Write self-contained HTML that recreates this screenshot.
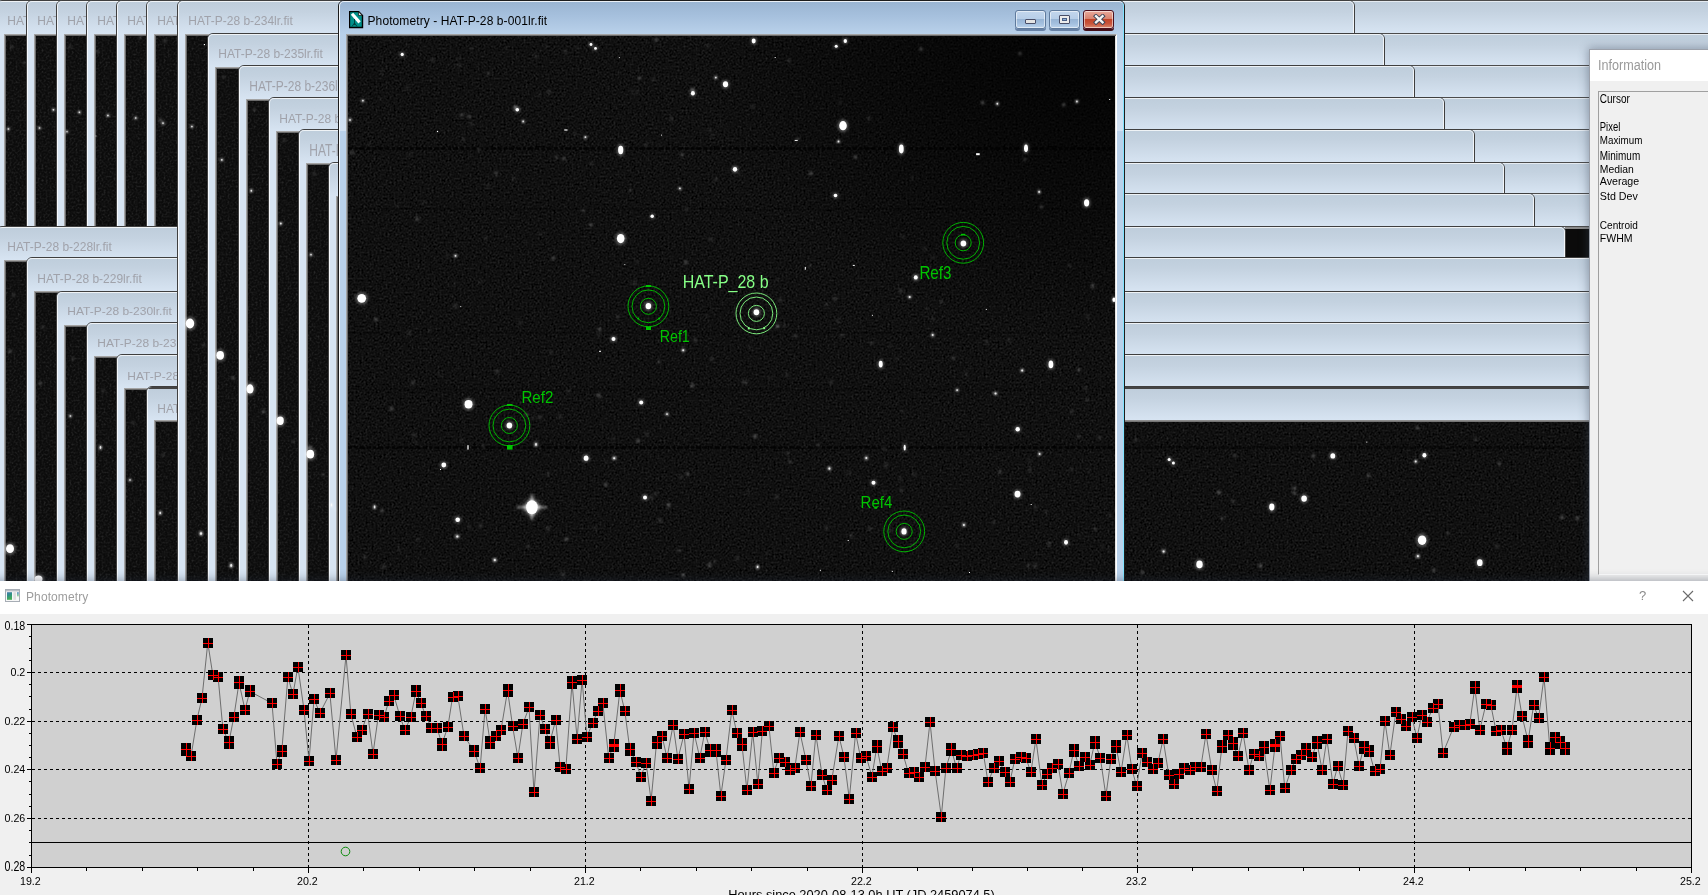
<!DOCTYPE html><html><head><meta charset="utf-8"><title>Photometry</title><style>
*{box-sizing:border-box;margin:0;padding:0}
html,body{width:1708px;height:895px;overflow:hidden;background:#f0f0f0;font-family:"Liberation Sans", sans-serif}
#top{position:absolute;left:0;top:0;width:1708px;height:581px;overflow:hidden;background:#d7e4f2}
.abs{position:absolute}
.win{position:absolute;border:1px solid #3f3f3f;border-radius:6px 6px 0 0;background:#d7e4f2;overflow:hidden}
.win .hl{position:absolute;left:0;top:0;right:0;bottom:0;border:1px solid rgba(255,255,255,.75);border-radius:5px 5px 0 0;border-bottom:none}
.win .tb{position:absolute;left:0;top:0;right:0;height:33px;background:linear-gradient(#becddb 0%,#c4d2e0 32%,#d7e4f2 100%)}
.win .tt{position:absolute;left:10.3px;top:14px;font-size:12px;line-height:14px;color:#a0a2aa;white-space:pre}
.win .cl{position:absolute;left:7px;top:33px;right:7px;bottom:-4px;border:1px solid;border-color:#a3a3a3 #fff #fff #a3a3a3;box-shadow:inset 1px 1px 0 #6b6b6b,inset -1px -1px 0 #e3e3e3;background:#0b0b0b}
.win.act{background:#b9d1ea;border-color:#1c1c1c}
.win.act .tb{background:linear-gradient(#99b4d1 0%,#a6c0dd 45%,#b9d1ea 100%)}
.win.act .tt{color:#000}
.row{position:absolute;left:1124px;right:0;border-top:1px solid #4c4c4c;background:linear-gradient(#becddb 0%,#c4d2e0 32%,#d7e4f2 100%)}
.row:after{content:"";position:absolute;left:0;right:0;top:0;height:1px;background:rgba(255,255,255,.6)}
.lbl{position:absolute;white-space:pre;transform-origin:0 0}
</style></head><body>
<svg width="0" height="0" style="position:absolute"><defs>
<filter id="noise" x="0" y="0" width="100%" height="100%" color-interpolation-filters="sRGB">
<feTurbulence type="fractalNoise" baseFrequency="0.5" numOctaves="2" seed="7" result="t"/>
<feColorMatrix in="t" type="matrix" values="0.13 0.13 0.13 0 -0.132  0.13 0.13 0.13 0 -0.132  0.13 0.13 0.13 0 -0.132  0 0 0 0 1"/>
</filter>
<filter id="sb" x="-20%" y="-20%" width="140%" height="140%"><feGaussianBlur stdDeviation="0.6"/></filter>
<filter id="sb2" x="-20%" y="-20%" width="140%" height="140%"><feGaussianBlur stdDeviation="0.95"/></filter>
</defs></svg>
<div id="top">
<div class="row" style="top:0px;height:33px"></div>
<div class="row" style="top:33px;height:32px"></div>
<div class="row" style="top:65px;height:32px"></div>
<div class="row" style="top:97px;height:32px"></div>
<div class="row" style="top:129px;height:33px"></div>
<div class="row" style="top:162px;height:31px"></div>
<div class="row" style="top:193px;height:33px"></div>
<div class="row" style="top:226px;height:31px"></div>
<div class="row" style="top:257px;height:34px"></div>
<div class="row" style="top:291px;height:31px"></div>
<div class="row" style="top:322px;height:32px"></div>
<div class="row" style="top:354px;height:32px"></div>
<div class="row" style="top:386px;height:36px"></div>
<div class="abs" style="left:1565px;top:227px;width:30px;height:30px;background:#0b0b0b;border-top:2px solid #8a8a8a"></div>
<div class="win " style="left:-4px;top:0px;width:1178px;height:700px"><div class="tb"></div><div class="hl"></div><div class="tt" style="top:12.64px;transform:scaleY(1.12);transform-origin:0 11.16px">HAT-P-28 b-222lr.fit</div><div class="cl"></div></div>
<div class="win " style="left:26px;top:0px;width:1178px;height:700px"><div class="tb"></div><div class="hl"></div><div class="tt" style="top:12.64px;transform:scaleY(1.12);transform-origin:0 11.16px">HAT-P-28 b-223lr.fit</div><div class="cl"></div></div>
<div class="win " style="left:56px;top:0px;width:1178px;height:700px"><div class="tb"></div><div class="hl"></div><div class="tt" style="top:12.64px;transform:scaleY(1.12);transform-origin:0 11.16px">HAT-P-28 b-224lr.fit</div><div class="cl"></div></div>
<div class="win " style="left:86px;top:0px;width:1178px;height:700px"><div class="tb"></div><div class="hl"></div><div class="tt" style="top:12.64px;transform:scaleY(1.12);transform-origin:0 11.16px">HAT-P-28 b-225lr.fit</div><div class="cl"></div></div>
<div class="win " style="left:116px;top:0px;width:1178px;height:700px"><div class="tb"></div><div class="hl"></div><div class="tt" style="top:12.64px;transform:scaleY(1.12);transform-origin:0 11.16px">HAT-P-28 b-226lr.fit</div><div class="cl"></div></div>
<div class="win " style="left:146px;top:0px;width:1178px;height:700px"><div class="tb"></div><div class="hl"></div><div class="tt" style="top:12.64px;transform:scaleY(1.12);transform-origin:0 11.16px">HAT-P-28 b-227lr.fit</div><div class="cl"></div></div>
<div class="win " style="left:-4px;top:226px;width:1178px;height:700px"><div class="tb"></div><div class="hl"></div><div class="tt" style="top:12.64px;transform:scaleY(1.0);transform-origin:0 11.16px">HAT-P-28 b-228lr.fit</div><div class="cl"></div></div>
<div class="win " style="left:26px;top:257px;width:1178px;height:700px"><div class="tb"></div><div class="hl"></div><div class="tt" style="top:14.44px;transform:scaleY(1.06);transform-origin:0 11.16px">HAT-P-28 b-229lr.fit</div><div class="cl"></div></div>
<div class="win " style="left:56px;top:291px;width:1178px;height:700px"><div class="tb"></div><div class="hl"></div><div class="tt" style="top:11.59px;transform:scaleY(0.98);transform-origin:0 11.16px">HAT-P-28 b-230lr.fit</div><div class="cl"></div></div>
<div class="win " style="left:86px;top:322px;width:1178px;height:700px"><div class="tb"></div><div class="hl"></div><div class="tt" style="top:13.44px;transform:scaleY(0.97);transform-origin:0 11.16px">HAT-P-28 b-231lr.fit</div><div class="cl"></div></div>
<div class="win " style="left:116px;top:354px;width:1178px;height:700px"><div class="tb"></div><div class="hl"></div><div class="tt" style="top:13.64px;transform:scaleY(0.98);transform-origin:0 11.16px">HAT-P-28 b-232lr.fit</div><div class="cl"></div></div>
<div class="win " style="left:146px;top:386px;width:1178px;height:700px"><div class="tb"></div><div class="hl"></div><div style="position:absolute;left:0;right:0;top:0;height:2px;background:#444"></div><div class="tt" style="top:14.64px;transform:scaleY(1.12);transform-origin:0 11.16px">HAT-P-28 b-233lr.fit</div><div class="cl"></div></div>
<div class="win " style="left:177px;top:0px;width:1178px;height:700px"><div class="tb"></div><div class="hl"></div><div class="tt" style="top:12.64px;transform:scaleY(1.12);transform-origin:0 11.16px">HAT-P-28 b-234lr.fit</div><div class="cl"></div></div>
<div class="win " style="left:207px;top:33px;width:1178px;height:700px"><div class="tb"></div><div class="hl"></div><div class="tt" style="top:12.84px;transform:scaleY(1.0);transform-origin:0 11.16px">HAT-P-28 b-235lr.fit</div><div class="cl"></div></div>
<div class="win " style="left:238px;top:65px;width:1177px;height:700px"><div class="tb"></div><div class="hl"></div><div class="tt" style="top:13.54px;transform:scaleY(1.19);transform-origin:0 11.16px">HAT-P-28 b-236lr.fit</div><div class="cl"></div></div>
<div class="win " style="left:268px;top:97px;width:1177px;height:700px"><div class="tb"></div><div class="hl"></div><div class="tt" style="top:13.54px;transform:scaleY(1.05);transform-origin:0 11.16px">HAT-P-28 b-237lr.fit</div><div class="cl"></div></div>
<div class="win " style="left:298px;top:129px;width:1177px;height:700px"><div class="tb"></div><div class="hl"></div><div class="tt" style="top:14.74px;transform:scaleY(1.33);transform-origin:0 11.16px">HAT-P-28 b-238lr.fit</div><div class="cl"></div></div>
<div class="win " style="left:328px;top:162px;width:1177px;height:700px"><div class="tb"></div><div class="hl"></div><div class="tt" style="top:12.84px;transform:scaleY(1.0);transform-origin:0 11.16px">HAT-P-28 b-239lr.fit</div><div class="cl"></div></div>
<div class="win " style="left:358px;top:193px;width:1177px;height:700px"><div class="tb"></div><div class="hl"></div><div class="tt" style="top:12.84px;transform:scaleY(1.0);transform-origin:0 11.16px">HAT-P-28 b-240lr.fit</div><div class="cl"></div></div>
<div class="win " style="left:388px;top:226px;width:1178px;height:700px"><div class="tb"></div><div class="hl"></div><div class="tt" style="top:12.84px;transform:scaleY(1.0);transform-origin:0 11.16px">HAT-P-28 b-241lr.fit</div><div class="cl"></div></div>
<div class="win " style="left:418px;top:257px;width:1177px;height:700px"><div class="tb"></div><div class="hl"></div><div class="tt" style="top:12.84px;transform:scaleY(1.0);transform-origin:0 11.16px">HAT-P-28 b-242lr.fit</div><div class="cl"></div></div>
<div class="win " style="left:448px;top:291px;width:1177px;height:700px"><div class="tb"></div><div class="hl"></div><div class="tt" style="top:12.84px;transform:scaleY(1.0);transform-origin:0 11.16px">HAT-P-28 b-243lr.fit</div><div class="cl"></div></div>
<div class="win " style="left:478px;top:322px;width:1177px;height:700px"><div class="tb"></div><div class="hl"></div><div class="tt" style="top:12.84px;transform:scaleY(1.0);transform-origin:0 11.16px">HAT-P-28 b-244lr.fit</div><div class="cl"></div></div>
<div class="win " style="left:508px;top:354px;width:1177px;height:700px"><div class="tb"></div><div class="hl"></div><div class="tt" style="top:12.84px;transform:scaleY(1.0);transform-origin:0 11.16px">HAT-P-28 b-245lr.fit</div><div class="cl"></div></div>
<div class="win " style="left:538px;top:386px;width:1177px;height:700px"><div class="tb"></div><div class="hl"></div><div style="position:absolute;left:0;right:0;top:0;height:2px;background:#444"></div><div class="tt" style="top:12.84px;transform:scaleY(1.0);transform-origin:0 11.16px">HAT-P-28 b-246lr.fit</div><div class="cl"></div></div>
<svg class="abs" style="left:0;top:34px;mix-blend-mode:lighten" width="338" height="547" viewBox="0 0 338 547"><rect x="0" y="0" width="338" height="547" filter="url(#noise)"/></svg><svg class="abs" style="left:0;top:0" width="338" height="581" viewBox="0 0 338 581"><g filter="url(#sb2)"><ellipse cx="8.4" cy="129.0" rx="1.5" ry="1.5" fill="#fff" fill-opacity="0.7"/><ellipse cx="39.5" cy="128.0" rx="1.5" ry="1.5" fill="#fff" fill-opacity="0.7"/><ellipse cx="67.0" cy="131.7" rx="1.2" ry="1.5" fill="#fff" fill-opacity="0.7"/><ellipse cx="79.4" cy="112.3" rx="1.5" ry="1.5" fill="#fff" fill-opacity="0.7"/><ellipse cx="107.9" cy="115.6" rx="1.5" ry="1.5" fill="#fff" fill-opacity="0.7"/><ellipse cx="135.7" cy="118.0" rx="1.5" ry="1.5" fill="#fff" fill-opacity="0.7"/><ellipse cx="163.0" cy="123.2" rx="1.5" ry="1.5" fill="#fff" fill-opacity="0.7"/><ellipse cx="160.5" cy="120.0" rx="2.0" ry="2.0" fill="#fff" fill-opacity="0.2"/><ellipse cx="12.0" cy="47.0" rx="1.5" ry="1.5" fill="#fff" fill-opacity="0.2"/><ellipse cx="24.0" cy="63.0" rx="1.2" ry="1.5" fill="#fff" fill-opacity="0.2"/><ellipse cx="70.0" cy="47.0" rx="1.4" ry="1.4" fill="#fff" fill-opacity="0.2"/><ellipse cx="98.0" cy="52.0" rx="1.4" ry="1.4" fill="#fff" fill-opacity="0.2"/><ellipse cx="140.0" cy="38.0" rx="1.4" ry="1.4" fill="#fff" fill-opacity="0.2"/><ellipse cx="165.0" cy="41.0" rx="1.4" ry="1.4" fill="#fff" fill-opacity="0.2"/><ellipse cx="53.4" cy="109.8" rx="1.5" ry="1.5" fill="#fff" fill-opacity="0.7"/><ellipse cx="191.9" cy="126.6" rx="1.5" ry="1.5" fill="#fff" fill-opacity="0.7"/><ellipse cx="221.8" cy="159.8" rx="1.6" ry="1.6" fill="#fff" fill-opacity="0.7"/><ellipse cx="251.3" cy="190.8" rx="1.5" ry="1.8" fill="#fff" fill-opacity="0.7"/><ellipse cx="280.8" cy="223.5" rx="1.6" ry="1.6" fill="#fff" fill-opacity="0.7"/><ellipse cx="311.0" cy="254.7" rx="1.5" ry="1.5" fill="#fff" fill-opacity="0.7"/><ellipse cx="254.3" cy="109.7" rx="1.5" ry="1.5" fill="#fff" fill-opacity="0.2"/><ellipse cx="284.1" cy="140.7" rx="1.5" ry="1.5" fill="#fff" fill-opacity="0.2"/><ellipse cx="314.4" cy="173.9" rx="1.5" ry="1.5" fill="#fff" fill-opacity="0.2"/><ellipse cx="224.0" cy="77.0" rx="1.5" ry="1.5" fill="#fff" fill-opacity="0.2"/><ellipse cx="190.0" cy="323.5" rx="6.27" ry="7.35" fill="#fff" fill-opacity="0.26"/><ellipse cx="220.2" cy="355.3" rx="5.73" ry="6.54" fill="#fff" fill-opacity="0.26"/><ellipse cx="250.0" cy="388.9" rx="5.46" ry="6.81" fill="#fff" fill-opacity="0.26"/><ellipse cx="280.2" cy="420.7" rx="5.46" ry="6.27" fill="#fff" fill-opacity="0.26"/><ellipse cx="310.3" cy="454.2" rx="5.73" ry="6.54" fill="#fff" fill-opacity="0.26"/><ellipse cx="309.5" cy="447.0" rx="2.5" ry="1.5" fill="#fff" fill-opacity="0.32"/><ellipse cx="203.5" cy="345.5" rx="1.4" ry="1.4" fill="#fff" fill-opacity="0.2"/><ellipse cx="233.0" cy="378.0" rx="1.6" ry="1.6" fill="#fff" fill-opacity="0.32"/><ellipse cx="263.5" cy="411.5" rx="1.6" ry="1.6" fill="#fff" fill-opacity="0.32"/><ellipse cx="293.0" cy="441.5" rx="1.4" ry="1.4" fill="#fff" fill-opacity="0.2"/><ellipse cx="323.0" cy="474.5" rx="1.4" ry="1.4" fill="#fff" fill-opacity="0.2"/><ellipse cx="201.0" cy="533.6" rx="2.0" ry="2.4" fill="#fff" fill-opacity="0.7"/><ellipse cx="231.2" cy="565.5" rx="1.8" ry="2.6" fill="#fff" fill-opacity="0.7"/><ellipse cx="331.5" cy="505.0" rx="1.2" ry="2.6" fill="#fff" fill-opacity="0.7"/><ellipse cx="335.0" cy="509.0" rx="1.2" ry="1.6" fill="#fff" fill-opacity="0.2"/><ellipse cx="10.0" cy="351.3" rx="1.5" ry="1.5" fill="#fff" fill-opacity="0.32"/><ellipse cx="40.2" cy="383.2" rx="1.5" ry="1.5" fill="#fff" fill-opacity="0.32"/><ellipse cx="70.4" cy="416.0" rx="1.5" ry="1.5" fill="#fff" fill-opacity="0.7"/><ellipse cx="100.5" cy="447.5" rx="1.4" ry="2.6" fill="#fff" fill-opacity="0.7"/><ellipse cx="130.0" cy="480.0" rx="1.5" ry="1.5" fill="#fff" fill-opacity="0.7"/><ellipse cx="160.2" cy="512.9" rx="1.5" ry="2.2" fill="#fff" fill-opacity="0.7"/><ellipse cx="10.0" cy="548.7" rx="6.0" ry="6.54" fill="#fff" fill-opacity="0.26"/><ellipse cx="38.5" cy="579.0" rx="6.0" ry="5.46" fill="#fff" fill-opacity="0.26"/><ellipse cx="24.0" cy="571.0" rx="1.4" ry="1.4" fill="#fff" fill-opacity="0.2"/><ellipse cx="13.5" cy="295.0" rx="1.4" ry="1.4" fill="#fff" fill-opacity="0.2"/><ellipse cx="43.0" cy="327.0" rx="1.4" ry="1.4" fill="#fff" fill-opacity="0.2"/><ellipse cx="73.0" cy="359.0" rx="1.4" ry="1.4" fill="#fff" fill-opacity="0.2"/><ellipse cx="103.0" cy="391.0" rx="1.4" ry="1.4" fill="#fff" fill-opacity="0.2"/><ellipse cx="133.0" cy="423.0" rx="1.4" ry="1.4" fill="#fff" fill-opacity="0.2"/><ellipse cx="163.0" cy="455.0" rx="1.4" ry="1.4" fill="#fff" fill-opacity="0.2"/><ellipse cx="10.0" cy="520.0" rx="1.4" ry="1.4" fill="#fff" fill-opacity="0.2"/></g><g filter="url(#sb)"><ellipse cx="8.4" cy="129.0" rx="0.83" ry="0.83" fill="#fff" fill-opacity="0.8"/><ellipse cx="39.5" cy="128.0" rx="0.83" ry="0.83" fill="#fff" fill-opacity="0.8"/><ellipse cx="67.0" cy="131.7" rx="0.66" ry="0.83" fill="#fff" fill-opacity="0.8"/><ellipse cx="79.4" cy="112.3" rx="0.83" ry="0.83" fill="#fff" fill-opacity="0.8"/><ellipse cx="107.9" cy="115.6" rx="0.83" ry="0.83" fill="#fff" fill-opacity="0.8"/><ellipse cx="135.7" cy="118.0" rx="0.83" ry="0.83" fill="#fff" fill-opacity="0.8"/><ellipse cx="163.0" cy="123.2" rx="0.83" ry="0.83" fill="#fff" fill-opacity="0.8"/><ellipse cx="53.4" cy="109.8" rx="0.83" ry="0.83" fill="#fff" fill-opacity="0.8"/><ellipse cx="191.9" cy="126.6" rx="0.83" ry="0.83" fill="#fff" fill-opacity="0.8"/><ellipse cx="221.8" cy="159.8" rx="0.88" ry="0.88" fill="#fff" fill-opacity="0.8"/><ellipse cx="251.3" cy="190.8" rx="0.83" ry="0.99" fill="#fff" fill-opacity="0.8"/><ellipse cx="280.8" cy="223.5" rx="0.88" ry="0.88" fill="#fff" fill-opacity="0.8"/><ellipse cx="311.0" cy="254.7" rx="0.83" ry="0.83" fill="#fff" fill-opacity="0.8"/><ellipse cx="190.0" cy="323.5" rx="4.2" ry="5.0" fill="#fff" fill-opacity="1.0"/><ellipse cx="220.2" cy="355.3" rx="3.8" ry="4.4" fill="#fff" fill-opacity="1.0"/><ellipse cx="250.0" cy="388.9" rx="3.6" ry="4.6" fill="#fff" fill-opacity="1.0"/><ellipse cx="280.2" cy="420.7" rx="3.6" ry="4.2" fill="#fff" fill-opacity="1.0"/><ellipse cx="310.3" cy="454.2" rx="3.8" ry="4.4" fill="#fff" fill-opacity="1.0"/><ellipse cx="201.0" cy="533.6" rx="1.1" ry="1.32" fill="#fff" fill-opacity="0.8"/><ellipse cx="231.2" cy="565.5" rx="0.99" ry="1.43" fill="#fff" fill-opacity="0.8"/><ellipse cx="331.5" cy="505.0" rx="0.66" ry="1.43" fill="#fff" fill-opacity="0.8"/><ellipse cx="70.4" cy="416.0" rx="0.83" ry="0.83" fill="#fff" fill-opacity="0.8"/><ellipse cx="100.5" cy="447.5" rx="0.77" ry="1.43" fill="#fff" fill-opacity="0.8"/><ellipse cx="130.0" cy="480.0" rx="0.83" ry="0.83" fill="#fff" fill-opacity="0.8"/><ellipse cx="160.2" cy="512.9" rx="0.83" ry="1.21" fill="#fff" fill-opacity="0.8"/><ellipse cx="10.0" cy="548.7" rx="4.0" ry="4.4" fill="#fff" fill-opacity="1.0"/><ellipse cx="38.5" cy="579.0" rx="4.0" ry="3.6" fill="#fff" fill-opacity="1.0"/></g><rect x="95.5" y="135.5" width="1.0" height="1.0" fill="#fff" fill-opacity="0.7999999999999999"/><rect x="203.8" y="44.0" width="1.2" height="1.2" fill="#fff" fill-opacity="1"/></svg>
<div class="abs" style="left:1124px;top:420px;width:470px;height:2px;background:linear-gradient(#9a9a9a,#6a6a6a)"></div><svg class="abs" style="left:1125px;top:422px" width="466" height="170" viewBox="1125 422 466 170"><g transform="translate(1125,422)"><rect x="0" y="0" width="466" height="170" filter="url(#noise)"/></g><line x1="1125" x2="1591" y1="447.5" y2="447.5" stroke="#000" stroke-opacity="0.5" stroke-width="2.4" stroke-dasharray="3 1.5 2 1 4 1.2"/><g filter="url(#sb2)"><ellipse cx="1169.2" cy="459.5" rx="2.63" ry="2.63" fill="#fff" fill-opacity="0.26"/><ellipse cx="1173.4" cy="462.9" rx="2.63" ry="2.63" fill="#fff" fill-opacity="0.26"/><ellipse cx="1332.8" cy="455.9" rx="3.84" ry="4.11" fill="#fff" fill-opacity="0.26"/><ellipse cx="1313.4" cy="455.9" rx="1.6" ry="1.6" fill="#fff" fill-opacity="0.32"/><ellipse cx="1424.4" cy="455.3" rx="3.3" ry="3.57" fill="#fff" fill-opacity="0.26"/><ellipse cx="1415.7" cy="461.5" rx="1.7" ry="1.7" fill="#fff" fill-opacity="0.7"/><ellipse cx="1417.4" cy="427.8" rx="1.5" ry="1.5" fill="#fff" fill-opacity="0.32"/><ellipse cx="1499.4" cy="463.5" rx="1.5" ry="1.5" fill="#fff" fill-opacity="0.32"/><ellipse cx="1304.1" cy="498.6" rx="4.38" ry="4.92" fill="#fff" fill-opacity="0.26"/><ellipse cx="1271.8" cy="507.0" rx="4.11" ry="5.19" fill="#fff" fill-opacity="0.26"/><ellipse cx="1294.3" cy="488.2" rx="1.6" ry="1.8" fill="#fff" fill-opacity="0.32"/><ellipse cx="1294.3" cy="493.0" rx="1.6" ry="1.6" fill="#fff" fill-opacity="0.32"/><ellipse cx="1218.9" cy="492.4" rx="1.8" ry="1.8" fill="#fff" fill-opacity="0.32"/><ellipse cx="1422.1" cy="540.2" rx="6.27" ry="7.08" fill="#fff" fill-opacity="0.26"/><ellipse cx="1417.9" cy="556.2" rx="1.8" ry="2.0" fill="#fff" fill-opacity="0.7"/><ellipse cx="1199.5" cy="564.4" rx="4.92" ry="5.73" fill="#fff" fill-opacity="0.26"/><ellipse cx="1479.8" cy="562.7" rx="4.38" ry="5.19" fill="#fff" fill-opacity="0.26"/><ellipse cx="1163.6" cy="551.4" rx="1.8" ry="1.8" fill="#fff" fill-opacity="0.7"/><ellipse cx="1562.1" cy="517.2" rx="1.6" ry="1.8" fill="#fff" fill-opacity="0.32"/><ellipse cx="1577.3" cy="518.3" rx="1.6" ry="1.8" fill="#fff" fill-opacity="0.32"/><ellipse cx="1260.5" cy="565.5" rx="1.4" ry="2.6" fill="#fff" fill-opacity="0.32"/><ellipse cx="1433.9" cy="570.3" rx="1.5" ry="1.8" fill="#fff" fill-opacity="0.32"/><ellipse cx="1142.5" cy="572.5" rx="1.5" ry="1.5" fill="#fff" fill-opacity="0.32"/><ellipse cx="1368.7" cy="475.6" rx="1.5" ry="1.5" fill="#fff" fill-opacity="0.32"/><ellipse cx="1234.7" cy="455.3" rx="1.5" ry="1.5" fill="#fff" fill-opacity="0.2"/><ellipse cx="1222.6" cy="518.3" rx="1.6" ry="1.6" fill="#fff" fill-opacity="0.2"/><ellipse cx="1136.0" cy="440.0" rx="1.6" ry="1.6" fill="#fff" fill-opacity="0.2"/><ellipse cx="1233.0" cy="501.0" rx="1.5" ry="1.5" fill="#fff" fill-opacity="0.2"/><ellipse cx="1476.0" cy="439.0" rx="1.5" ry="1.5" fill="#fff" fill-opacity="0.2"/><ellipse cx="1448.0" cy="533.0" rx="1.5" ry="1.5" fill="#fff" fill-opacity="0.2"/><ellipse cx="1497.0" cy="546.0" rx="1.5" ry="1.5" fill="#fff" fill-opacity="0.2"/></g><g filter="url(#sb)"><ellipse cx="1169.2" cy="459.5" rx="1.5" ry="1.5" fill="#fff" fill-opacity="1.0"/><ellipse cx="1173.4" cy="462.9" rx="1.5" ry="1.5" fill="#fff" fill-opacity="1.0"/><ellipse cx="1332.8" cy="455.9" rx="2.4" ry="2.6" fill="#fff" fill-opacity="1.0"/><ellipse cx="1424.4" cy="455.3" rx="2.0" ry="2.2" fill="#fff" fill-opacity="1.0"/><ellipse cx="1415.7" cy="461.5" rx="0.94" ry="0.94" fill="#fff" fill-opacity="0.8"/><ellipse cx="1304.1" cy="498.6" rx="2.8" ry="3.2" fill="#fff" fill-opacity="1.0"/><ellipse cx="1271.8" cy="507.0" rx="2.6" ry="3.4" fill="#fff" fill-opacity="1.0"/><ellipse cx="1422.1" cy="540.2" rx="4.2" ry="4.8" fill="#fff" fill-opacity="1.0"/><ellipse cx="1417.9" cy="556.2" rx="0.99" ry="1.1" fill="#fff" fill-opacity="0.8"/><ellipse cx="1199.5" cy="564.4" rx="3.2" ry="3.8" fill="#fff" fill-opacity="1.0"/><ellipse cx="1479.8" cy="562.7" rx="2.8" ry="3.4" fill="#fff" fill-opacity="1.0"/><ellipse cx="1163.6" cy="551.4" rx="0.99" ry="0.99" fill="#fff" fill-opacity="0.8"/></g><rect x="1366.3" y="441.6" width="1.0" height="1.0" fill="#fff" fill-opacity="1"/></svg>
<div class="win act" style="left:338px;top:0;width:787px;height:700px"><div class="tb"></div><div class="hl" style="border-color:rgba(255,255,255,.8) #7fe3ff rgba(255,255,255,.8) rgba(255,255,255,.9)"></div><div class="abs" style="left:1px;top:33px;width:6px;height:97px;background:linear-gradient(#b9d1ea,#d2e1f2)"></div><div class="abs" style="left:778px;top:33px;width:6px;height:97px;background:linear-gradient(#b9d1ea,#d2e1f2)"></div><svg class="abs" style="left:10px;top:10px" width="15" height="18" viewBox="0 0 15 18"><path d="M0.5 0.5 H9.5 L13.5 4.5 V16.5 H0.5 Z" fill="#00908a" stroke="#000" stroke-width="1.4"/><path d="M9.5 0.8 V4.5 H13.2 Z" fill="#e8e8e8" stroke="#000" stroke-width="0.6"/><line x1="3" y1="2.8" x2="10.6" y2="11.4" stroke="#fff" stroke-width="3.1"/><path d="M5.5 8 L5.5 14 M5.5 12 L3 15.5 M5.5 12 L8 15.5" stroke="#003b38" stroke-width="0.9" fill="none"/></svg><div class="tt" style="left:28.5px;top:12.54px;letter-spacing:0.1px;transform:scaleY(1.09);transform-origin:0 11.16px;color:#000">Photometry - HAT-P-28 b-001lr.fit</div><div class="abs" style="left:676px;top:9px;width:31px;height:19px;border:1px solid #5f7a9c;border-radius:3px;background:linear-gradient(#c3d6ec 0%,#b7cee8 45%,#98b5d5 50%,#a4c0df 75%,#bcd3ec 100%);box-shadow:inset 0 0 0 1px rgba(255,255,255,.55), 0 2px 0 #6781a5"><div class="abs" style="left:9px;top:8px;width:11px;height:5px;background:#e4e4e4;border:1px solid #4a4f68;border-radius:1px"></div></div><div class="abs" style="left:710px;top:9px;width:31px;height:19px;border:1px solid #5f7a9c;border-radius:3px;background:linear-gradient(#c3d6ec 0%,#b7cee8 45%,#98b5d5 50%,#a4c0df 75%,#bcd3ec 100%);box-shadow:inset 0 0 0 1px rgba(255,255,255,.55), 0 2px 0 #6781a5"><div class="abs" style="left:9px;top:3.5px;width:11px;height:9px;background:#ececec;border:1px solid #4a4f68;border-radius:1px"></div><div class="abs" style="left:12px;top:6.5px;width:5px;height:3px;background:#8fb0d6;border:1px solid #4a5f86"></div></div><div class="abs" style="left:744px;top:9px;width:31px;height:19px;border:1px solid #4c0f1c;border-radius:3px;background:linear-gradient(#e9a99b 0%,#d8836f 45%,#c2452a 50%,#c9553c 75%,#d98a72 100%);box-shadow:inset 0 0 0 1px rgba(255,255,255,.55), 0 2px 0 #431019"><svg class="abs" style="left:9px;top:3px" width="13" height="11" viewBox="0 0 13 11"><path d="M3 2.2 L9.6 8.4 M9.6 2.2 L3 8.4" stroke="#3f4658" stroke-width="4.2" stroke-linecap="square"/><path d="M3 2.2 L9.6 8.4 M9.6 2.2 L3 8.4" stroke="#f4f4f4" stroke-width="2.3" stroke-linecap="square"/></svg></div><div class="cl"><svg class="abs" style="left:1px;top:1px" width="767" height="560" viewBox="348 36 767 560" font-family='"Liberation Sans", sans-serif'><g transform="translate(348,36)"><rect x="0" y="0" width="767" height="560" filter="url(#noise)"/></g><defs><radialGradient id="vg" cx="1" cy="0" r="0.55"><stop offset="0" stop-color="#000" stop-opacity="0.85"/><stop offset="1" stop-color="#000" stop-opacity="0"/></radialGradient><radialGradient id="halo"><stop offset="0" stop-color="#fff" stop-opacity="0.9"/><stop offset="0.45" stop-color="#fff" stop-opacity="0.35"/><stop offset="1" stop-color="#fff" stop-opacity="0"/></radialGradient></defs><rect x="348" y="36" width="767" height="560" fill="url(#vg)"/><line x1="348" x2="1115" y1="148.5" y2="148.5" stroke="#000" stroke-opacity="0.8" stroke-width="2.6" stroke-dasharray="4 2.5 3 2 5 2.2"/><line x1="348" x2="1115" y1="447.5" y2="447.5" stroke="#000" stroke-opacity="0.8" stroke-width="2.6" stroke-dasharray="4 2.5 3 2 5 2.2"/><line x1="348" x2="1115" y1="209" y2="209" stroke="#000" stroke-opacity="0.25" stroke-width="2" stroke-dasharray="3 1.5 2 1 4 1.2"/><line x1="348" x2="1115" y1="333" y2="333" stroke="#000" stroke-opacity="0.25" stroke-width="2" stroke-dasharray="3 1.5 2 1 4 1.2"/><line x1="348" x2="1115" y1="389.5" y2="389.5" stroke="#000" stroke-opacity="0.25" stroke-width="2" stroke-dasharray="3 1.5 2 1 4 1.2"/><g filter="url(#sb2)"><ellipse cx="402.2" cy="54.4" rx="2.76" ry="2.76" fill="#fff" fill-opacity="0.26"/><ellipse cx="591.0" cy="44.5" rx="2.49" ry="2.49" fill="#fff" fill-opacity="0.26"/><ellipse cx="595.5" cy="48.4" rx="2.49" ry="2.49" fill="#fff" fill-opacity="0.26"/><ellipse cx="656.2" cy="40.0" rx="1.6" ry="1.6" fill="#fff" fill-opacity="0.32"/><ellipse cx="639.4" cy="78.0" rx="1.6" ry="1.6" fill="#fff" fill-opacity="0.32"/><ellipse cx="715.8" cy="77.6" rx="1.5" ry="1.7" fill="#fff" fill-opacity="0.7"/><ellipse cx="725.5" cy="84.3" rx="4.11" ry="4.65" fill="#fff" fill-opacity="0.26"/><ellipse cx="692.9" cy="93.3" rx="3.3" ry="3.57" fill="#fff" fill-opacity="0.26"/><ellipse cx="692.5" cy="89.5" rx="1.8" ry="1.8" fill="#fff" fill-opacity="0.32"/><ellipse cx="362.9" cy="100.7" rx="1.5" ry="1.5" fill="#fff" fill-opacity="0.7"/><ellipse cx="350.0" cy="119.9" rx="1.5" ry="1.8" fill="#fff" fill-opacity="0.7"/><ellipse cx="517.3" cy="109.7" rx="3.03" ry="3.03" fill="#fff" fill-opacity="0.26"/><ellipse cx="515.5" cy="107.5" rx="2.2" ry="2.2" fill="#fff" fill-opacity="0.32"/><ellipse cx="523.2" cy="121.4" rx="1.4" ry="1.6" fill="#fff" fill-opacity="0.7"/><ellipse cx="461.8" cy="114.7" rx="1.5" ry="1.5" fill="#fff" fill-opacity="0.32"/><ellipse cx="469.2" cy="116.5" rx="1.5" ry="1.5" fill="#fff" fill-opacity="0.32"/><ellipse cx="585.4" cy="137.2" rx="1.5" ry="1.5" fill="#fff" fill-opacity="0.7"/><ellipse cx="620.7" cy="150.0" rx="4.11" ry="6.27" fill="#fff" fill-opacity="0.26"/><ellipse cx="564.1" cy="158.5" rx="1.5" ry="1.5" fill="#fff" fill-opacity="0.32"/><ellipse cx="556.5" cy="157.0" rx="1.5" ry="1.5" fill="#fff" fill-opacity="0.2"/><ellipse cx="682.1" cy="154.7" rx="1.3" ry="1.8" fill="#fff" fill-opacity="0.32"/><ellipse cx="679.9" cy="188.4" rx="1.5" ry="1.5" fill="#fff" fill-opacity="0.7"/><ellipse cx="652.2" cy="216.3" rx="2.9" ry="2.9" fill="#fff" fill-opacity="0.26"/><ellipse cx="591.0" cy="224.8" rx="1.6" ry="1.6" fill="#fff" fill-opacity="0.32"/><ellipse cx="686.6" cy="209.0" rx="1.6" ry="1.6" fill="#fff" fill-opacity="0.2"/><ellipse cx="416.8" cy="219.2" rx="1.6" ry="1.6" fill="#fff" fill-opacity="0.2"/><ellipse cx="630.0" cy="190.0" rx="1.5" ry="1.5" fill="#fff" fill-opacity="0.2"/><ellipse cx="753.7" cy="41.0" rx="3.3" ry="3.84" fill="#fff" fill-opacity="0.26"/><ellipse cx="836.2" cy="46.2" rx="2.63" ry="2.63" fill="#fff" fill-opacity="0.26"/><ellipse cx="845.3" cy="41.0" rx="2.9" ry="3.3" fill="#fff" fill-opacity="0.26"/><ellipse cx="921.0" cy="49.1" rx="1.5" ry="1.5" fill="#fff" fill-opacity="0.32"/><ellipse cx="1020.0" cy="53.6" rx="1.4" ry="1.4" fill="#fff" fill-opacity="0.32"/><ellipse cx="789.0" cy="61.0" rx="1.5" ry="1.5" fill="#fff" fill-opacity="0.2"/><ellipse cx="982.7" cy="102.7" rx="1.6" ry="1.6" fill="#fff" fill-opacity="0.32"/><ellipse cx="997.3" cy="103.8" rx="1.5" ry="1.8" fill="#fff" fill-opacity="0.7"/><ellipse cx="1076.9" cy="101.5" rx="1.5" ry="1.7" fill="#fff" fill-opacity="0.7"/><ellipse cx="1063.8" cy="104.9" rx="1.3" ry="1.8" fill="#fff" fill-opacity="0.32"/><ellipse cx="843.0" cy="125.7" rx="5.73" ry="6.81" fill="#fff" fill-opacity="0.26"/><ellipse cx="838.5" cy="141.5" rx="1.6" ry="1.6" fill="#fff" fill-opacity="0.7"/><ellipse cx="901.3" cy="149.0" rx="3.84" ry="6.54" fill="#fff" fill-opacity="0.26"/><ellipse cx="1026.0" cy="148.3" rx="3.3" ry="5.73" fill="#fff" fill-opacity="0.26"/><ellipse cx="855.4" cy="157.1" rx="1.6" ry="1.6" fill="#fff" fill-opacity="0.32"/><ellipse cx="735.0" cy="169.3" rx="3.57" ry="3.84" fill="#fff" fill-opacity="0.26"/><ellipse cx="810.9" cy="173.2" rx="1.7" ry="1.7" fill="#fff" fill-opacity="0.32"/><ellipse cx="835.5" cy="195.5" rx="3.03" ry="3.03" fill="#fff" fill-opacity="0.26"/><ellipse cx="1039.1" cy="191.9" rx="1.5" ry="1.9" fill="#fff" fill-opacity="0.7"/><ellipse cx="1086.6" cy="202.8" rx="4.11" ry="5.46" fill="#fff" fill-opacity="0.26"/><ellipse cx="1041.5" cy="207.0" rx="1.5" ry="2" fill="#fff" fill-opacity="0.2"/><ellipse cx="1025.0" cy="159.5" rx="1.4" ry="1.4" fill="#fff" fill-opacity="0.2"/><ellipse cx="869.0" cy="118.0" rx="1.6" ry="1.6" fill="#fff" fill-opacity="0.2"/><ellipse cx="620.7" cy="238.6" rx="5.73" ry="6.81" fill="#fff" fill-opacity="0.26"/><ellipse cx="455.5" cy="255.8" rx="1.6" ry="1.6" fill="#fff" fill-opacity="0.7"/><ellipse cx="553.3" cy="258.0" rx="1.6" ry="1.6" fill="#fff" fill-opacity="0.32"/><ellipse cx="686.0" cy="262.3" rx="1.6" ry="1.6" fill="#fff" fill-opacity="0.32"/><ellipse cx="361.7" cy="298.3" rx="6.54" ry="6.54" fill="#fff" fill-opacity="0.26"/><ellipse cx="375.9" cy="319.6" rx="1.5" ry="1.8" fill="#fff" fill-opacity="0.32"/><ellipse cx="648.4" cy="306.1" rx="4.38" ry="4.92" fill="#fff" fill-opacity="0.26"/><ellipse cx="613.5" cy="339.0" rx="3.3" ry="3.3" fill="#fff" fill-opacity="0.26"/><ellipse cx="599.6" cy="329.3" rx="1.4" ry="1.8" fill="#fff" fill-opacity="0.32"/><ellipse cx="618.0" cy="317.0" rx="1.4" ry="1.8" fill="#fff" fill-opacity="0.2"/><ellipse cx="683.2" cy="350.2" rx="1.7" ry="1.7" fill="#fff" fill-opacity="0.7"/><ellipse cx="692.2" cy="385.5" rx="1.3" ry="2.4" fill="#fff" fill-opacity="0.32"/><ellipse cx="468.5" cy="404.2" rx="6.0" ry="6.27" fill="#fff" fill-opacity="0.26"/><ellipse cx="509.4" cy="425.5" rx="4.38" ry="4.65" fill="#fff" fill-opacity="0.26"/><ellipse cx="641.2" cy="402.4" rx="3.3" ry="3.3" fill="#fff" fill-opacity="0.26"/><ellipse cx="667.0" cy="414.1" rx="1.7" ry="1.7" fill="#fff" fill-opacity="0.7"/><ellipse cx="598.5" cy="395.0" rx="1.6" ry="1.6" fill="#fff" fill-opacity="0.32"/><ellipse cx="391.6" cy="408.7" rx="1.6" ry="1.6" fill="#fff" fill-opacity="0.32"/><ellipse cx="540.0" cy="417.0" rx="1.6" ry="1.6" fill="#fff" fill-opacity="0.2"/><ellipse cx="560.0" cy="417.0" rx="1.5" ry="1.5" fill="#fff" fill-opacity="0.2"/><ellipse cx="712.0" cy="358.5" rx="1.6" ry="1.6" fill="#fff" fill-opacity="0.2"/><ellipse cx="963.4" cy="243.5" rx="4.38" ry="4.65" fill="#fff" fill-opacity="0.26"/><ellipse cx="915.8" cy="277.4" rx="3.3" ry="3.57" fill="#fff" fill-opacity="0.26"/><ellipse cx="909.7" cy="297.0" rx="1.8" ry="1.6" fill="#fff" fill-opacity="0.7"/><ellipse cx="941.0" cy="302.0" rx="1.5" ry="1.5" fill="#fff" fill-opacity="0.2"/><ellipse cx="756.4" cy="312.2" rx="4.38" ry="4.65" fill="#fff" fill-opacity="0.26"/><ellipse cx="1092.7" cy="286.2" rx="1.2" ry="2.4" fill="#fff" fill-opacity="0.32"/><ellipse cx="1114.0" cy="299.7" rx="2.76" ry="3.57" fill="#fff" fill-opacity="0.26"/><ellipse cx="932.7" cy="335.0" rx="1.7" ry="1.7" fill="#fff" fill-opacity="0.7"/><ellipse cx="777.5" cy="326.4" rx="1.8" ry="1.8" fill="#fff" fill-opacity="0.32"/><ellipse cx="795.5" cy="335.5" rx="1.6" ry="1.6" fill="#fff" fill-opacity="0.2"/><ellipse cx="842.0" cy="335.5" rx="1.5" ry="1.5" fill="#fff" fill-opacity="0.2"/><ellipse cx="880.7" cy="364.1" rx="3.3" ry="5.19" fill="#fff" fill-opacity="0.26"/><ellipse cx="1050.9" cy="364.4" rx="3.84" ry="5.73" fill="#fff" fill-opacity="0.26"/><ellipse cx="1022.2" cy="370.5" rx="1.8" ry="1.8" fill="#fff" fill-opacity="0.7"/><ellipse cx="1079.0" cy="370.0" rx="1.4" ry="1.4" fill="#fff" fill-opacity="0.32"/><ellipse cx="995.5" cy="393.5" rx="1.8" ry="1.8" fill="#fff" fill-opacity="0.7"/><ellipse cx="957.1" cy="390.1" rx="1.6" ry="1.6" fill="#fff" fill-opacity="0.7"/><ellipse cx="1017.7" cy="429.3" rx="3.57" ry="3.57" fill="#fff" fill-opacity="0.26"/><ellipse cx="1009.5" cy="340.0" rx="1.4" ry="1.4" fill="#fff" fill-opacity="0.2"/><ellipse cx="1072.0" cy="411.0" rx="1.5" ry="1.5" fill="#fff" fill-opacity="0.2"/><ellipse cx="953.5" cy="358.0" rx="1.8" ry="1.8" fill="#fff" fill-opacity="0.2"/><ellipse cx="536.0" cy="444.5" rx="1.6" ry="2.6" fill="#fff" fill-opacity="0.7"/><ellipse cx="586.1" cy="458.2" rx="3.84" ry="4.11" fill="#fff" fill-opacity="0.26"/><ellipse cx="614.2" cy="458.2" rx="1.9" ry="1.9" fill="#fff" fill-opacity="0.7"/><ellipse cx="638.3" cy="440.9" rx="1.8" ry="1.6" fill="#fff" fill-opacity="0.32"/><ellipse cx="443.8" cy="465.0" rx="3.84" ry="3.84" fill="#fff" fill-opacity="0.26"/><ellipse cx="687.7" cy="474.0" rx="1.6" ry="1.6" fill="#fff" fill-opacity="0.32"/><ellipse cx="605.7" cy="484.7" rx="1.6" ry="1.6" fill="#fff" fill-opacity="0.32"/><ellipse cx="645.0" cy="497.6" rx="3.3" ry="3.3" fill="#fff" fill-opacity="0.26"/><ellipse cx="668.6" cy="505.0" rx="1.4" ry="2.4" fill="#fff" fill-opacity="0.32"/><ellipse cx="374.6" cy="507.0" rx="1.4" ry="2.6" fill="#fff" fill-opacity="0.7"/><ellipse cx="382.0" cy="511.0" rx="1.4" ry="1.4" fill="#fff" fill-opacity="0.32"/><ellipse cx="457.7" cy="519.8" rx="3.71" ry="3.71" fill="#fff" fill-opacity="0.26"/><ellipse cx="457.3" cy="536.5" rx="2.0" ry="2.0" fill="#fff" fill-opacity="0.7"/><ellipse cx="566.3" cy="539.2" rx="1.7" ry="1.7" fill="#fff" fill-opacity="0.32"/><ellipse cx="494.8" cy="560.1" rx="2.0" ry="2.0" fill="#fff" fill-opacity="0.7"/><ellipse cx="709.5" cy="565.0" rx="1.3" ry="2.4" fill="#fff" fill-opacity="0.32"/><ellipse cx="683.2" cy="575.1" rx="1.5" ry="2" fill="#fff" fill-opacity="0.32"/><ellipse cx="365.0" cy="557.0" rx="1.6" ry="1.6" fill="#fff" fill-opacity="0.2"/><ellipse cx="679.0" cy="550.5" rx="1.6" ry="1.6" fill="#fff" fill-opacity="0.2"/><ellipse cx="755.3" cy="436.3" rx="1.8" ry="1.8" fill="#fff" fill-opacity="0.32"/><ellipse cx="904.7" cy="447.6" rx="2.09" ry="4.38" fill="#fff" fill-opacity="0.26"/><ellipse cx="1039.6" cy="453.9" rx="1.6" ry="1.8" fill="#fff" fill-opacity="0.7"/><ellipse cx="866.3" cy="458.0" rx="1.7" ry="1.9" fill="#fff" fill-opacity="0.7"/><ellipse cx="829.4" cy="468.6" rx="1.8" ry="2.0" fill="#fff" fill-opacity="0.7"/><ellipse cx="788.0" cy="453.0" rx="1.6" ry="1.6" fill="#fff" fill-opacity="0.2"/><ellipse cx="790.0" cy="462.0" rx="1.8" ry="1.8" fill="#fff" fill-opacity="0.2"/><ellipse cx="873.5" cy="482.8" rx="3.3" ry="3.3" fill="#fff" fill-opacity="0.26"/><ellipse cx="1017.5" cy="494.1" rx="4.65" ry="5.19" fill="#fff" fill-opacity="0.26"/><ellipse cx="904.0" cy="531.4" rx="4.11" ry="4.92" fill="#fff" fill-opacity="0.26"/><ellipse cx="963.9" cy="524.9" rx="1.8" ry="1.8" fill="#fff" fill-opacity="0.7"/><ellipse cx="1066.0" cy="542.3" rx="3.3" ry="3.84" fill="#fff" fill-opacity="0.26"/><ellipse cx="851.0" cy="535.5" rx="1.6" ry="1.6" fill="#fff" fill-opacity="0.2"/><ellipse cx="757.6" cy="566.9" rx="1.5" ry="2.2" fill="#fff" fill-opacity="0.7"/><ellipse cx="1078.5" cy="436.3" rx="1.5" ry="1.5" fill="#fff" fill-opacity="0.2"/><ellipse cx="1099.5" cy="437.5" rx="1.4" ry="1.8" fill="#fff" fill-opacity="0.2"/><ellipse cx="1095.5" cy="529.5" rx="0.6" ry="2.2" fill="#fff" fill-opacity="0.32"/></g><g filter="url(#sb)"><ellipse cx="402.2" cy="54.4" rx="1.6" ry="1.6" fill="#fff" fill-opacity="1.0"/><ellipse cx="591.0" cy="44.5" rx="1.4" ry="1.4" fill="#fff" fill-opacity="1.0"/><ellipse cx="595.5" cy="48.4" rx="1.4" ry="1.4" fill="#fff" fill-opacity="1.0"/><ellipse cx="715.8" cy="77.6" rx="0.83" ry="0.94" fill="#fff" fill-opacity="0.8"/><ellipse cx="725.5" cy="84.3" rx="2.6" ry="3.0" fill="#fff" fill-opacity="1.0"/><ellipse cx="692.9" cy="93.3" rx="2.0" ry="2.2" fill="#fff" fill-opacity="1.0"/><ellipse cx="362.9" cy="100.7" rx="0.83" ry="0.83" fill="#fff" fill-opacity="0.8"/><ellipse cx="350.0" cy="119.9" rx="0.83" ry="0.99" fill="#fff" fill-opacity="0.8"/><ellipse cx="517.3" cy="109.7" rx="1.8" ry="1.8" fill="#fff" fill-opacity="1.0"/><ellipse cx="523.2" cy="121.4" rx="0.77" ry="0.88" fill="#fff" fill-opacity="0.8"/><ellipse cx="585.4" cy="137.2" rx="0.83" ry="0.83" fill="#fff" fill-opacity="0.8"/><ellipse cx="620.7" cy="150.0" rx="2.6" ry="4.2" fill="#fff" fill-opacity="1.0"/><ellipse cx="679.9" cy="188.4" rx="0.83" ry="0.83" fill="#fff" fill-opacity="0.8"/><ellipse cx="652.2" cy="216.3" rx="1.7" ry="1.7" fill="#fff" fill-opacity="1.0"/><ellipse cx="753.7" cy="41.0" rx="2.0" ry="2.4" fill="#fff" fill-opacity="1.0"/><ellipse cx="836.2" cy="46.2" rx="1.5" ry="1.5" fill="#fff" fill-opacity="1.0"/><ellipse cx="845.3" cy="41.0" rx="1.7" ry="2.0" fill="#fff" fill-opacity="1.0"/><ellipse cx="997.3" cy="103.8" rx="0.83" ry="0.99" fill="#fff" fill-opacity="0.8"/><ellipse cx="1076.9" cy="101.5" rx="0.83" ry="0.94" fill="#fff" fill-opacity="0.8"/><ellipse cx="843.0" cy="125.7" rx="3.8" ry="4.6" fill="#fff" fill-opacity="1.0"/><ellipse cx="838.5" cy="141.5" rx="0.88" ry="0.88" fill="#fff" fill-opacity="0.8"/><ellipse cx="901.3" cy="149.0" rx="2.4" ry="4.4" fill="#fff" fill-opacity="1.0"/><ellipse cx="1026.0" cy="148.3" rx="2.0" ry="3.8" fill="#fff" fill-opacity="1.0"/><ellipse cx="735.0" cy="169.3" rx="2.2" ry="2.4" fill="#fff" fill-opacity="1.0"/><ellipse cx="835.5" cy="195.5" rx="1.8" ry="1.8" fill="#fff" fill-opacity="1.0"/><ellipse cx="1039.1" cy="191.9" rx="0.83" ry="1.04" fill="#fff" fill-opacity="0.8"/><ellipse cx="1086.6" cy="202.8" rx="2.6" ry="3.6" fill="#fff" fill-opacity="1.0"/><ellipse cx="620.7" cy="238.6" rx="3.8" ry="4.6" fill="#fff" fill-opacity="1.0"/><ellipse cx="455.5" cy="255.8" rx="0.88" ry="0.88" fill="#fff" fill-opacity="0.8"/><ellipse cx="361.7" cy="298.3" rx="4.4" ry="4.4" fill="#fff" fill-opacity="1.0"/><ellipse cx="648.4" cy="306.1" rx="2.8" ry="3.2" fill="#fff" fill-opacity="1.0"/><ellipse cx="613.5" cy="339.0" rx="2.0" ry="2.0" fill="#fff" fill-opacity="1.0"/><ellipse cx="683.2" cy="350.2" rx="0.94" ry="0.94" fill="#fff" fill-opacity="0.8"/><ellipse cx="468.5" cy="404.2" rx="4.0" ry="4.2" fill="#fff" fill-opacity="1.0"/><ellipse cx="509.4" cy="425.5" rx="2.8" ry="3.0" fill="#fff" fill-opacity="1.0"/><ellipse cx="641.2" cy="402.4" rx="2.0" ry="2.0" fill="#fff" fill-opacity="1.0"/><ellipse cx="667.0" cy="414.1" rx="0.94" ry="0.94" fill="#fff" fill-opacity="0.8"/><ellipse cx="963.4" cy="243.5" rx="2.8" ry="3.0" fill="#fff" fill-opacity="1.0"/><ellipse cx="915.8" cy="277.4" rx="2.0" ry="2.2" fill="#fff" fill-opacity="1.0"/><ellipse cx="909.7" cy="297.0" rx="0.99" ry="0.88" fill="#fff" fill-opacity="0.8"/><ellipse cx="756.4" cy="312.2" rx="2.8" ry="3.0" fill="#fff" fill-opacity="1.0"/><ellipse cx="1114.0" cy="299.7" rx="1.6" ry="2.2" fill="#fff" fill-opacity="1.0"/><ellipse cx="932.7" cy="335.0" rx="0.94" ry="0.94" fill="#fff" fill-opacity="0.8"/><ellipse cx="880.7" cy="364.1" rx="2.0" ry="3.4" fill="#fff" fill-opacity="1.0"/><ellipse cx="1050.9" cy="364.4" rx="2.4" ry="3.8" fill="#fff" fill-opacity="1.0"/><ellipse cx="1022.2" cy="370.5" rx="0.99" ry="0.99" fill="#fff" fill-opacity="0.8"/><ellipse cx="995.5" cy="393.5" rx="0.99" ry="0.99" fill="#fff" fill-opacity="0.8"/><ellipse cx="957.1" cy="390.1" rx="0.88" ry="0.88" fill="#fff" fill-opacity="0.8"/><ellipse cx="1017.7" cy="429.3" rx="2.2" ry="2.2" fill="#fff" fill-opacity="1.0"/><ellipse cx="536.0" cy="444.5" rx="0.88" ry="1.43" fill="#fff" fill-opacity="0.8"/><ellipse cx="586.1" cy="458.2" rx="2.4" ry="2.6" fill="#fff" fill-opacity="1.0"/><ellipse cx="614.2" cy="458.2" rx="1.04" ry="1.04" fill="#fff" fill-opacity="0.8"/><ellipse cx="443.8" cy="465.0" rx="2.4" ry="2.4" fill="#fff" fill-opacity="1.0"/><ellipse cx="645.0" cy="497.6" rx="2.0" ry="2.0" fill="#fff" fill-opacity="1.0"/><ellipse cx="374.6" cy="507.0" rx="0.77" ry="1.43" fill="#fff" fill-opacity="0.8"/><ellipse cx="457.7" cy="519.8" rx="2.3" ry="2.3" fill="#fff" fill-opacity="1.0"/><ellipse cx="457.3" cy="536.5" rx="1.1" ry="1.1" fill="#fff" fill-opacity="0.8"/><ellipse cx="494.8" cy="560.1" rx="1.1" ry="1.1" fill="#fff" fill-opacity="0.8"/><ellipse cx="904.7" cy="447.6" rx="1.1" ry="2.8" fill="#fff" fill-opacity="1.0"/><ellipse cx="1039.6" cy="453.9" rx="0.88" ry="0.99" fill="#fff" fill-opacity="0.8"/><ellipse cx="866.3" cy="458.0" rx="0.94" ry="1.04" fill="#fff" fill-opacity="0.8"/><ellipse cx="829.4" cy="468.6" rx="0.99" ry="1.1" fill="#fff" fill-opacity="0.8"/><ellipse cx="873.5" cy="482.8" rx="2.0" ry="2.0" fill="#fff" fill-opacity="1.0"/><ellipse cx="1017.5" cy="494.1" rx="3.0" ry="3.4" fill="#fff" fill-opacity="1.0"/><ellipse cx="904.0" cy="531.4" rx="2.6" ry="3.2" fill="#fff" fill-opacity="1.0"/><ellipse cx="963.9" cy="524.9" rx="0.99" ry="0.99" fill="#fff" fill-opacity="0.8"/><ellipse cx="1066.0" cy="542.3" rx="2.0" ry="2.4" fill="#fff" fill-opacity="1.0"/><ellipse cx="757.6" cy="566.9" rx="0.83" ry="1.21" fill="#fff" fill-opacity="0.8"/></g><rect x="436.9" y="130.9" width="1.2" height="1.2" fill="#fff" fill-opacity="1"/><rect x="564.3" y="129.4" width="3.2" height="1.2" fill="#fff" fill-opacity="1"/><rect x="660.9" y="134.6" width="1.0" height="1.0" fill="#fff" fill-opacity="1"/><rect x="618.9" y="57.1" width="1.0" height="1.0" fill="#fff" fill-opacity="0.7999999999999999"/><rect x="774.7" y="57.0" width="1.0" height="1.0" fill="#fff" fill-opacity="1"/><rect x="1109.2" y="99.0" width="1.0" height="1.0" fill="#fff" fill-opacity="1"/><rect x="794.7" y="139.9" width="3.0" height="1.0" fill="#fff" fill-opacity="1"/><rect x="976.1" y="153.2" width="3.6" height="2.0" fill="#fff" fill-opacity="1"/><rect x="624.3" y="264.1" width="1.0" height="1.0" fill="#fff" fill-opacity="0.7999999999999999"/><rect x="460.2" y="306.1" width="1.0" height="1.0" fill="#fff" fill-opacity="0.7999999999999999"/><rect x="599.0" y="350.8" width="2.0" height="1.0" fill="#fff" fill-opacity="1"/><rect x="804.8" y="266.9" width="1.0" height="2.8" fill="#fff" fill-opacity="1"/><rect x="852.8" y="264.9" width="2.0" height="1.0" fill="#fff" fill-opacity="1"/><rect x="871.9" y="314.8" width="1.0" height="1.0" fill="#fff" fill-opacity="1"/><rect x="985.8" y="308.9" width="1.0" height="1.0" fill="#fff" fill-opacity="1"/><rect x="467.2" y="445.2" width="1.6" height="4.4" fill="#fff" fill-opacity="0.7999999999999999"/><rect x="440.0" y="469.0" width="1.0" height="1.0" fill="#fff" fill-opacity="1"/><rect x="1030.7" y="504.0" width="1.0" height="1.0" fill="#fff" fill-opacity="1"/><rect x="847.7" y="540.0" width="1.0" height="1.0" fill="#fff" fill-opacity="1"/><rect x="819.9" y="569.8" width="1.0" height="1.0" fill="#fff" fill-opacity="1"/><rect x="891.8" y="570.9" width="1.0" height="1.0" fill="#fff" fill-opacity="1"/><rect x="969.0" y="572.0" width="1.0" height="1.0" fill="#fff" fill-opacity="1"/><g filter="url(#sb2)"><ellipse cx="531.9" cy="507.2" rx="12" ry="12" fill="url(#halo)" opacity="0.6"/><line x1="516.9" x2="546.9" y1="507.2" y2="507.2" stroke="#fff" stroke-opacity="0.4" stroke-width="2.6"/><line x1="531.9" x2="531.9" y1="494.2" y2="520.2" stroke="#fff" stroke-opacity="0.4" stroke-width="2.6"/><path d="M522.9 507.2 L531.9 497.2 L540.9 507.2 L531.9 517.2 Z" fill="#fff" fill-opacity="0.55"/></g><g filter="url(#sb)"><ellipse cx="531.9" cy="507.2" rx="5.8" ry="7" fill="#fff"/></g><g filter="url(#sb2)"><ellipse cx="695.4" cy="340.0" rx="1.94" ry="2.21" fill="#fff" fill-opacity="0.12"/><ellipse cx="797.8" cy="139.0" rx="1.61" ry="1.91" fill="#fff" fill-opacity="0.15"/><ellipse cx="423.4" cy="202.6" rx="1.27" ry="1.58" fill="#fff" fill-opacity="0.14"/><ellipse cx="383.8" cy="566.5" rx="1.97" ry="2.36" fill="#fff" fill-opacity="0.13"/><ellipse cx="471.5" cy="48.0" rx="1.62" ry="1.65" fill="#fff" fill-opacity="0.09"/><ellipse cx="535.6" cy="56.1" rx="1.57" ry="1.78" fill="#fff" fill-opacity="0.15"/><ellipse cx="746.0" cy="383.2" rx="1.6" ry="1.92" fill="#fff" fill-opacity="0.12"/><ellipse cx="563.1" cy="574.7" rx="2.0" ry="2.5" fill="#fff" fill-opacity="0.14"/><ellipse cx="591.3" cy="163.1" rx="1.43" ry="1.46" fill="#fff" fill-opacity="0.15"/><ellipse cx="655.9" cy="493.8" rx="1.51" ry="1.94" fill="#fff" fill-opacity="0.15"/><ellipse cx="352.4" cy="152.4" rx="1.93" ry="2.2" fill="#fff" fill-opacity="0.17"/><ellipse cx="653.6" cy="79.1" rx="1.7" ry="2.1" fill="#fff" fill-opacity="0.1"/><ellipse cx="418.1" cy="218.3" rx="1.97" ry="2.42" fill="#fff" fill-opacity="0.08"/><ellipse cx="539.0" cy="94.2" rx="1.25" ry="1.55" fill="#fff" fill-opacity="0.09"/><ellipse cx="776.5" cy="279.8" rx="1.35" ry="1.65" fill="#fff" fill-opacity="0.08"/><ellipse cx="840.6" cy="102.4" rx="1.54" ry="1.63" fill="#fff" fill-opacity="0.1"/><ellipse cx="1088.9" cy="470.6" rx="1.44" ry="1.83" fill="#fff" fill-opacity="0.09"/><ellipse cx="651.3" cy="497.9" rx="1.71" ry="1.77" fill="#fff" fill-opacity="0.17"/><ellipse cx="513.9" cy="178.4" rx="1.82" ry="2.0" fill="#fff" fill-opacity="0.1"/><ellipse cx="407.7" cy="88.3" rx="1.67" ry="1.79" fill="#fff" fill-opacity="0.13"/><ellipse cx="634.1" cy="282.9" rx="1.97" ry="2.25" fill="#fff" fill-opacity="0.13"/><ellipse cx="469.0" cy="526.9" rx="1.85" ry="1.99" fill="#fff" fill-opacity="0.09"/><ellipse cx="913.2" cy="544.1" rx="1.36" ry="1.74" fill="#fff" fill-opacity="0.16"/><ellipse cx="810.1" cy="265.9" rx="1.28" ry="1.3" fill="#fff" fill-opacity="0.17"/><ellipse cx="533.0" cy="417.7" rx="1.41" ry="1.75" fill="#fff" fill-opacity="0.13"/><ellipse cx="574.7" cy="134.0" rx="1.78" ry="1.81" fill="#fff" fill-opacity="0.09"/><ellipse cx="776.6" cy="496.9" rx="1.69" ry="1.83" fill="#fff" fill-opacity="0.16"/><ellipse cx="506.8" cy="48.9" rx="1.42" ry="1.6" fill="#fff" fill-opacity="0.08"/><ellipse cx="485.8" cy="237.7" rx="1.66" ry="1.72" fill="#fff" fill-opacity="0.11"/><ellipse cx="1028.2" cy="565.5" rx="1.73" ry="2.08" fill="#fff" fill-opacity="0.13"/><ellipse cx="458.5" cy="58.8" rx="1.21" ry="1.55" fill="#fff" fill-opacity="0.14"/><ellipse cx="834.9" cy="298.5" rx="1.78" ry="1.96" fill="#fff" fill-opacity="0.17"/><ellipse cx="409.1" cy="332.7" rx="1.79" ry="2.27" fill="#fff" fill-opacity="0.14"/><ellipse cx="886.1" cy="465.2" rx="1.93" ry="2.14" fill="#fff" fill-opacity="0.14"/><ellipse cx="1035.7" cy="506.9" rx="1.53" ry="1.9" fill="#fff" fill-opacity="0.16"/><ellipse cx="786.8" cy="375.0" rx="1.51" ry="1.77" fill="#fff" fill-opacity="0.13"/><ellipse cx="412.9" cy="382.7" rx="1.99" ry="2.52" fill="#fff" fill-opacity="0.14"/><ellipse cx="646.8" cy="434.0" rx="1.66" ry="1.88" fill="#fff" fill-opacity="0.15"/><ellipse cx="415.6" cy="442.1" rx="1.22" ry="1.44" fill="#fff" fill-opacity="0.12"/><ellipse cx="526.7" cy="414.3" rx="1.6" ry="1.89" fill="#fff" fill-opacity="0.16"/><ellipse cx="546.2" cy="46.1" rx="1.44" ry="1.73" fill="#fff" fill-opacity="0.09"/><ellipse cx="480.7" cy="525.5" rx="1.73" ry="1.96" fill="#fff" fill-opacity="0.16"/><ellipse cx="600.2" cy="396.9" rx="1.36" ry="1.53" fill="#fff" fill-opacity="0.15"/><ellipse cx="1045.9" cy="511.8" rx="1.51" ry="1.77" fill="#fff" fill-opacity="0.1"/><ellipse cx="455.4" cy="306.1" rx="1.87" ry="2.35" fill="#fff" fill-opacity="0.14"/><ellipse cx="480.4" cy="281.5" rx="1.42" ry="1.51" fill="#fff" fill-opacity="0.11"/><ellipse cx="826.9" cy="304.7" rx="1.45" ry="1.82" fill="#fff" fill-opacity="0.17"/><ellipse cx="695.4" cy="80.0" rx="1.23" ry="1.55" fill="#fff" fill-opacity="0.07"/><ellipse cx="889.9" cy="345.8" rx="1.45" ry="1.79" fill="#fff" fill-opacity="0.07"/><ellipse cx="455.1" cy="283.8" rx="1.22" ry="1.52" fill="#fff" fill-opacity="0.09"/><ellipse cx="458.9" cy="65.2" rx="1.7" ry="1.93" fill="#fff" fill-opacity="0.13"/><ellipse cx="849.2" cy="472.8" rx="1.97" ry="2.37" fill="#fff" fill-opacity="0.09"/><ellipse cx="712.6" cy="135.8" rx="1.21" ry="1.38" fill="#fff" fill-opacity="0.14"/><ellipse cx="487.9" cy="186.0" rx="1.48" ry="1.79" fill="#fff" fill-opacity="0.12"/><ellipse cx="818.4" cy="445.3" rx="1.51" ry="1.87" fill="#fff" fill-opacity="0.16"/><ellipse cx="418.2" cy="539.9" rx="1.78" ry="1.85" fill="#fff" fill-opacity="0.12"/><ellipse cx="826.8" cy="527.7" rx="1.5" ry="1.76" fill="#fff" fill-opacity="0.16"/><ellipse cx="956.7" cy="546.1" rx="1.57" ry="1.88" fill="#fff" fill-opacity="0.09"/><ellipse cx="899.9" cy="478.6" rx="1.71" ry="2.08" fill="#fff" fill-opacity="0.09"/><ellipse cx="1035.1" cy="565.5" rx="1.98" ry="2.3" fill="#fff" fill-opacity="0.15"/><ellipse cx="595.2" cy="527.8" rx="1.88" ry="2.08" fill="#fff" fill-opacity="0.08"/><ellipse cx="686.6" cy="335.0" rx="1.81" ry="2.08" fill="#fff" fill-opacity="0.07"/><ellipse cx="606.3" cy="462.3" rx="1.31" ry="1.37" fill="#fff" fill-opacity="0.12"/><ellipse cx="901.2" cy="490.2" rx="1.75" ry="2.25" fill="#fff" fill-opacity="0.12"/><ellipse cx="520.1" cy="322.3" rx="1.43" ry="1.75" fill="#fff" fill-opacity="0.13"/><ellipse cx="748.8" cy="492.2" rx="1.65" ry="1.8" fill="#fff" fill-opacity="0.11"/><ellipse cx="993.6" cy="522.7" rx="1.37" ry="1.72" fill="#fff" fill-opacity="0.17"/><ellipse cx="749.9" cy="347.1" rx="1.36" ry="1.58" fill="#fff" fill-opacity="0.12"/><ellipse cx="1087.8" cy="316.6" rx="1.52" ry="1.89" fill="#fff" fill-opacity="0.13"/><ellipse cx="724.7" cy="410.4" rx="1.25" ry="1.46" fill="#fff" fill-opacity="0.11"/><ellipse cx="1078.3" cy="535.0" rx="1.42" ry="1.62" fill="#fff" fill-opacity="0.08"/><ellipse cx="681.2" cy="477.2" rx="1.92" ry="2.19" fill="#fff" fill-opacity="0.1"/><ellipse cx="497.3" cy="371.2" rx="1.94" ry="2.02" fill="#fff" fill-opacity="0.15"/><ellipse cx="369.3" cy="144.0" rx="1.38" ry="1.67" fill="#fff" fill-opacity="0.1"/><ellipse cx="621.7" cy="372.2" rx="1.28" ry="1.57" fill="#fff" fill-opacity="0.08"/><ellipse cx="739.4" cy="174.3" rx="1.36" ry="1.57" fill="#fff" fill-opacity="0.11"/><ellipse cx="637.2" cy="261.6" rx="1.62" ry="1.7" fill="#fff" fill-opacity="0.09"/><ellipse cx="831.2" cy="382.2" rx="1.62" ry="2.04" fill="#fff" fill-opacity="0.13"/><ellipse cx="914.2" cy="474.4" rx="1.92" ry="2.1" fill="#fff" fill-opacity="0.1"/><ellipse cx="1109.8" cy="515.7" rx="1.31" ry="1.4" fill="#fff" fill-opacity="0.14"/><ellipse cx="549.0" cy="92.0" rx="1.87" ry="2.1" fill="#fff" fill-opacity="0.15"/><ellipse cx="447.6" cy="255.9" rx="1.75" ry="1.76" fill="#fff" fill-opacity="0.09"/><ellipse cx="869.9" cy="528.5" rx="1.97" ry="2.04" fill="#fff" fill-opacity="0.12"/><ellipse cx="927.4" cy="309.5" rx="1.75" ry="1.85" fill="#fff" fill-opacity="0.08"/><ellipse cx="432.6" cy="60.1" rx="1.64" ry="1.89" fill="#fff" fill-opacity="0.13"/><ellipse cx="463.2" cy="138.9" rx="1.36" ry="1.71" fill="#fff" fill-opacity="0.17"/><ellipse cx="399.0" cy="550.0" rx="1.57" ry="1.93" fill="#fff" fill-opacity="0.1"/><ellipse cx="706.4" cy="316.2" rx="1.54" ry="1.82" fill="#fff" fill-opacity="0.07"/><ellipse cx="884.1" cy="492.5" rx="1.35" ry="1.53" fill="#fff" fill-opacity="0.14"/><ellipse cx="659.6" cy="144.6" rx="1.33" ry="1.54" fill="#fff" fill-opacity="0.07"/><ellipse cx="1029.9" cy="469.7" rx="1.76" ry="2.22" fill="#fff" fill-opacity="0.13"/><ellipse cx="659.0" cy="361.4" rx="1.6" ry="2.08" fill="#fff" fill-opacity="0.15"/><ellipse cx="548.0" cy="528.5" rx="1.8" ry="2.21" fill="#fff" fill-opacity="0.15"/><ellipse cx="659.9" cy="520.5" rx="1.9" ry="2.3" fill="#fff" fill-opacity="0.15"/><ellipse cx="932.8" cy="257.5" rx="1.78" ry="1.82" fill="#fff" fill-opacity="0.1"/><ellipse cx="707.8" cy="45.7" rx="1.48" ry="1.77" fill="#fff" fill-opacity="0.13"/><ellipse cx="528.2" cy="546.3" rx="1.73" ry="1.91" fill="#fff" fill-opacity="0.14"/><ellipse cx="784.3" cy="325.7" rx="1.51" ry="1.97" fill="#fff" fill-opacity="0.13"/><ellipse cx="884.2" cy="448.3" rx="1.98" ry="2.0" fill="#fff" fill-opacity="0.13"/><ellipse cx="912.7" cy="177.6" rx="1.52" ry="1.54" fill="#fff" fill-opacity="0.09"/><ellipse cx="637.1" cy="92.8" rx="1.4" ry="1.78" fill="#fff" fill-opacity="0.13"/><ellipse cx="737.4" cy="558.4" rx="1.65" ry="2.15" fill="#fff" fill-opacity="0.13"/><ellipse cx="805.5" cy="447.0" rx="1.24" ry="1.58" fill="#fff" fill-opacity="0.09"/><ellipse cx="710.1" cy="130.6" rx="1.6" ry="1.89" fill="#fff" fill-opacity="0.08"/><ellipse cx="1069.5" cy="265.5" rx="1.62" ry="1.91" fill="#fff" fill-opacity="0.11"/><ellipse cx="568.9" cy="391.1" rx="1.65" ry="1.79" fill="#fff" fill-opacity="0.14"/><ellipse cx="576.7" cy="47.5" rx="1.4" ry="1.41" fill="#fff" fill-opacity="0.09"/><ellipse cx="924.8" cy="249.0" rx="1.92" ry="2.35" fill="#fff" fill-opacity="0.08"/><ellipse cx="1102.5" cy="546.2" rx="1.26" ry="1.6" fill="#fff" fill-opacity="0.11"/><ellipse cx="714.5" cy="561.6" rx="1.39" ry="1.61" fill="#fff" fill-opacity="0.16"/><ellipse cx="900.6" cy="291.0" rx="1.98" ry="2.47" fill="#fff" fill-opacity="0.13"/><ellipse cx="439.4" cy="374.6" rx="1.56" ry="1.66" fill="#fff" fill-opacity="0.08"/><ellipse cx="752.8" cy="106.6" rx="1.55" ry="1.87" fill="#fff" fill-opacity="0.12"/><ellipse cx="551.0" cy="352.1" rx="1.54" ry="1.89" fill="#fff" fill-opacity="0.12"/><ellipse cx="1109.2" cy="550.6" rx="1.79" ry="1.92" fill="#fff" fill-opacity="0.08"/><ellipse cx="1029.6" cy="460.4" rx="1.7" ry="1.88" fill="#fff" fill-opacity="0.1"/><ellipse cx="871.9" cy="342.8" rx="1.67" ry="1.99" fill="#fff" fill-opacity="0.15"/><ellipse cx="496.1" cy="173.4" rx="1.98" ry="2.53" fill="#fff" fill-opacity="0.16"/><ellipse cx="382.0" cy="72.6" rx="1.42" ry="1.6" fill="#fff" fill-opacity="0.13"/><ellipse cx="429.8" cy="330.3" rx="1.26" ry="1.29" fill="#fff" fill-opacity="0.14"/><ellipse cx="769.9" cy="378.3" rx="1.5" ry="1.71" fill="#fff" fill-opacity="0.09"/><ellipse cx="612.9" cy="439.2" rx="1.87" ry="1.91" fill="#fff" fill-opacity="0.08"/><ellipse cx="966.2" cy="374.3" rx="1.82" ry="1.93" fill="#fff" fill-opacity="0.11"/><ellipse cx="547.9" cy="474.1" rx="1.5" ry="1.79" fill="#fff" fill-opacity="0.17"/><ellipse cx="599.0" cy="334.1" rx="1.8" ry="2.29" fill="#fff" fill-opacity="0.11"/><ellipse cx="632.3" cy="92.0" rx="1.9" ry="1.94" fill="#fff" fill-opacity="0.08"/><ellipse cx="780.2" cy="299.9" rx="1.75" ry="1.91" fill="#fff" fill-opacity="0.15"/><ellipse cx="409.7" cy="154.3" rx="1.73" ry="1.77" fill="#fff" fill-opacity="0.1"/><ellipse cx="902.3" cy="412.0" rx="1.43" ry="1.49" fill="#fff" fill-opacity="0.11"/><ellipse cx="903.0" cy="236.4" rx="1.29" ry="1.57" fill="#fff" fill-opacity="0.13"/><ellipse cx="1049.2" cy="543.8" rx="1.93" ry="2.18" fill="#fff" fill-opacity="0.15"/><ellipse cx="583.3" cy="210.2" rx="1.52" ry="1.95" fill="#fff" fill-opacity="0.16"/><ellipse cx="540.5" cy="233.9" rx="1.49" ry="1.66" fill="#fff" fill-opacity="0.11"/><ellipse cx="646.2" cy="144.5" rx="1.65" ry="2.05" fill="#fff" fill-opacity="0.12"/><ellipse cx="986.8" cy="341.6" rx="1.34" ry="1.65" fill="#fff" fill-opacity="0.16"/><ellipse cx="565.6" cy="51.9" rx="1.61" ry="1.88" fill="#fff" fill-opacity="0.13"/><ellipse cx="1085.5" cy="389.0" rx="1.84" ry="1.88" fill="#fff" fill-opacity="0.12"/><ellipse cx="414.0" cy="435.1" rx="1.92" ry="1.97" fill="#fff" fill-opacity="0.13"/><ellipse cx="461.2" cy="439.7" rx="1.72" ry="1.85" fill="#fff" fill-opacity="0.09"/><ellipse cx="932.9" cy="319.6" rx="1.81" ry="2.03" fill="#fff" fill-opacity="0.1"/><ellipse cx="1086.9" cy="400.4" rx="1.59" ry="1.85" fill="#fff" fill-opacity="0.14"/><ellipse cx="889.5" cy="530.4" rx="1.53" ry="1.91" fill="#fff" fill-opacity="0.14"/><ellipse cx="999.8" cy="472.0" rx="1.87" ry="2.36" fill="#fff" fill-opacity="0.17"/><ellipse cx="838.0" cy="320.8" rx="1.77" ry="2.19" fill="#fff" fill-opacity="0.11"/><ellipse cx="671.1" cy="118.4" rx="1.79" ry="2.33" fill="#fff" fill-opacity="0.11"/><ellipse cx="479.3" cy="149.5" rx="1.54" ry="1.67" fill="#fff" fill-opacity="0.17"/><ellipse cx="396.9" cy="205.3" rx="1.29" ry="1.54" fill="#fff" fill-opacity="0.15"/><ellipse cx="488.2" cy="73.4" rx="1.57" ry="1.84" fill="#fff" fill-opacity="0.16"/><ellipse cx="379.6" cy="98.3" rx="1.35" ry="1.44" fill="#fff" fill-opacity="0.09"/><ellipse cx="896.4" cy="358.8" rx="1.38" ry="1.46" fill="#fff" fill-opacity="0.1"/><ellipse cx="482.9" cy="446.0" rx="1.45" ry="1.69" fill="#fff" fill-opacity="0.15"/><ellipse cx="715.9" cy="179.6" rx="1.91" ry="2.43" fill="#fff" fill-opacity="0.1"/><ellipse cx="767.4" cy="553.0" rx="1.59" ry="1.69" fill="#fff" fill-opacity="0.07"/><ellipse cx="1071.2" cy="469.6" rx="1.51" ry="1.75" fill="#fff" fill-opacity="0.12"/><ellipse cx="560.4" cy="570.8" rx="1.73" ry="1.85" fill="#fff" fill-opacity="0.07"/><ellipse cx="710.7" cy="239.2" rx="1.84" ry="2.23" fill="#fff" fill-opacity="0.13"/><ellipse cx="471.4" cy="124.1" rx="1.46" ry="1.57" fill="#fff" fill-opacity="0.16"/><ellipse cx="743.7" cy="381.4" rx="1.99" ry="2.15" fill="#fff" fill-opacity="0.12"/></g><circle cx="648.4" cy="306.3" r="8" fill="none" stroke="#00c400" stroke-width="0.9"/><circle cx="648.4" cy="306.3" r="16.4" fill="none" stroke="#00c400" stroke-width="0.9"/><circle cx="648.4" cy="306.3" r="20.4" fill="none" stroke="#00c400" stroke-width="0.9"/><rect x="646" y="285" width="5" height="2" fill="#00c400"/><rect x="646" y="326.6" width="5" height="3.4" fill="#00c400"/><rect x="637.4" y="317.6" width="1.8" height="1.8" fill="#00c400"/><rect x="658.2" y="317.6" width="1.8" height="1.8" fill="#00c400"/><circle cx="756.4" cy="313.4" r="8" fill="none" stroke="#86ff86" stroke-width="0.9"/><circle cx="756.4" cy="313.4" r="16.4" fill="none" stroke="#86ff86" stroke-width="0.9"/><circle cx="756.4" cy="313.4" r="20.4" fill="none" stroke="#86ff86" stroke-width="0.9"/><rect x="747.8" y="327.4" width="2" height="2" fill="#86ff86"/><rect x="763.2" y="327.2" width="2" height="2" fill="#86ff86"/><circle cx="509.4" cy="425.5" r="8" fill="none" stroke="#00c400" stroke-width="0.9"/><circle cx="509.4" cy="425.5" r="16.4" fill="none" stroke="#00c400" stroke-width="0.9"/><circle cx="509.4" cy="425.5" r="20.4" fill="none" stroke="#00c400" stroke-width="0.9"/><rect x="507" y="404" width="5.4" height="1.8" fill="#00c400"/><rect x="507" y="445" width="5.6" height="4.6" fill="#00c400"/><circle cx="963.2" cy="242.8" r="8" fill="none" stroke="#00c400" stroke-width="0.9"/><circle cx="963.2" cy="242.8" r="16.4" fill="none" stroke="#00c400" stroke-width="0.9"/><circle cx="963.2" cy="242.8" r="20.4" fill="none" stroke="#00c400" stroke-width="0.9"/><rect x="961" y="233.8" width="4.2" height="1.4" fill="#00c400"/><circle cx="904.2" cy="531.4" r="8" fill="none" stroke="#00c400" stroke-width="0.9"/><circle cx="904.2" cy="531.4" r="16.4" fill="none" stroke="#00c400" stroke-width="0.9"/><circle cx="904.2" cy="531.4" r="20.4" fill="none" stroke="#00c400" stroke-width="0.9"/><rect x="874.4" y="506.6" width="2.6" height="2.2" fill="#00c400"/><text x="0" y="0" font-size="17.5" fill="#86ff86" textLength="85.9" lengthAdjust="spacingAndGlyphs" transform="translate(682.7,287.9) scale(1,1.06)">HAT-P_28 b</text><text x="0" y="0" font-size="16" fill="#00c400" textLength="29.9" lengthAdjust="spacingAndGlyphs" transform="translate(659.8,341.8) scale(1,1.0)">Ref1</text><text x="0" y="0" font-size="16" fill="#00c400" textLength="31.9" lengthAdjust="spacingAndGlyphs" transform="translate(521.4,402.8) scale(1,1.0)">Ref2</text><text x="0" y="0" font-size="16" fill="#00c400" textLength="32.1" lengthAdjust="spacingAndGlyphs" transform="translate(919.4,279.4) scale(1,1.2)">Ref3</text><text x="0" y="0" font-size="16" fill="#00c400" textLength="31.7" lengthAdjust="spacingAndGlyphs" transform="translate(860.6,508.1) scale(1,1.06)">Ref4</text></svg></div></div>
<div class="abs" style="left:1589px;top:49px;width:130px;height:540px;background:#f0f0f0;border:1px solid rgba(70,80,100,.5);box-shadow:0 0 9px 1px rgba(60,70,90,.45)"><div class="abs" style="left:0;top:0;right:0;height:31px;background:#fff"></div><div class="lbl" style="left:8.4px;top:6px;font-size:14px;line-height:18px;color:#9a9a9a;transform:scaleX(0.9)">Information</div><div class="abs" style="left:8px;top:41px;width:140px;height:484px;border:1px solid;border-color:#a0a0a0 #fff #fff #a0a0a0"></div><svg class="abs" style="left:0;top:0" width="118" height="300" viewBox="1590 50 118 300" font-family='"Liberation Sans", sans-serif'><text x="0" y="0" font-size="11.8" fill="#000" textLength="30" lengthAdjust="spacingAndGlyphs" transform="translate(1599.8,103) scale(1,1.07)">Cursor</text><text x="0" y="0" font-size="11.8" fill="#000" textLength="20.5" lengthAdjust="spacingAndGlyphs" transform="translate(1599.8,130.5) scale(1,1.03)">Pixel</text><text x="0" y="0" font-size="11.8" fill="#000" textLength="42.6" lengthAdjust="spacingAndGlyphs" transform="translate(1599.8,143.8) scale(1,1.0)">Maximum</text><text x="0" y="0" font-size="11.8" fill="#000" textLength="40.4" lengthAdjust="spacingAndGlyphs" transform="translate(1599.8,159.8) scale(1,1.02)">Minimum</text><text x="0" y="0" font-size="11.8" fill="#000" textLength="34" lengthAdjust="spacingAndGlyphs" transform="translate(1599.8,172.6) scale(1,1.0)">Median</text><text x="0" y="0" font-size="11.8" fill="#000" textLength="39.4" lengthAdjust="spacingAndGlyphs" transform="translate(1599.8,185.2) scale(1,1.0)">Average</text><text x="0" y="0" font-size="11.8" fill="#000" textLength="38" lengthAdjust="spacingAndGlyphs" transform="translate(1599.8,199.6) scale(1,1.0)">Std Dev</text><text x="0" y="0" font-size="11.8" fill="#000" textLength="38" lengthAdjust="spacingAndGlyphs" transform="translate(1599.8,228.7) scale(1,1.0)">Centroid</text><text x="0" y="0" font-size="11.8" fill="#000" textLength="32.8" lengthAdjust="spacingAndGlyphs" transform="translate(1599.8,242.4) scale(1,1.0)">FWHM</text></svg></div>
</div>
<div class="abs" style="left:-20px;top:581px;width:1748px;height:33px;background:#fff;box-shadow:0 0 9px 1px rgba(40,50,70,.4)"></div><div class="abs" style="left:0;top:614px;width:1708px;height:281px;background:#f0f0f0"></div><svg class="abs" style="left:5px;top:589px" width="15" height="13" viewBox="0 0 15 13"><defs><linearGradient id="ig1" x1="0" y1="0" x2="0.3" y2="1"><stop offset="0" stop-color="#4a78b4"/><stop offset="0.45" stop-color="#2f8f86"/><stop offset="1" stop-color="#45ad55"/></linearGradient><linearGradient id="ig2" x1="0" y1="0" x2="0" y2="1"><stop offset="0" stop-color="#5b8fc4"/><stop offset="1" stop-color="#9fdc9a"/></linearGradient></defs><rect x="0.5" y="0.5" width="14" height="12" fill="#f7f7f7" stroke="#a7adb5"/><rect x="1" y="1" width="13" height="1.4" fill="#b9bec5"/><rect x="2" y="3.2" width="5" height="7.6" fill="url(#ig1)"/><rect x="8.4" y="3.2" width="2.6" height="7.6" fill="#dedede"/><rect x="12" y="3.2" width="1.8" height="4.2" fill="url(#ig2)"/></svg><div class="lbl" style="left:26px;top:590px;font-size:12px;line-height:14px;color:#9d9d9d;letter-spacing:0.1px">Photometry</div><div class="lbl" style="left:1639px;top:588px;font-size:13px;line-height:15px;color:#8a8a8a">?</div><svg class="abs" style="left:1682px;top:590px" width="12" height="12" viewBox="0 0 12 12"><path d="M1 1 L11 11 M11 1 L1 11" stroke="#6a6a6a" stroke-width="1.1"/></svg><svg class="abs" style="left:0;top:614px" width="1708" height="281" viewBox="0 614 1708 281" font-family='"Liberation Sans", sans-serif' shape-rendering="crispEdges"><rect x="31" y="624" width="1661" height="244" fill="#d0d0d0"/><line x1="308.5" x2="308.5" y1="625" y2="867" stroke="#000" stroke-width="1" stroke-dasharray="3 3"/><line x1="585.5" x2="585.5" y1="625" y2="867" stroke="#000" stroke-width="1" stroke-dasharray="3 3"/><line x1="862.5" x2="862.5" y1="625" y2="867" stroke="#000" stroke-width="1" stroke-dasharray="3 3"/><line x1="1137.5" x2="1137.5" y1="625" y2="867" stroke="#000" stroke-width="1" stroke-dasharray="3 3"/><line x1="1414.5" x2="1414.5" y1="625" y2="867" stroke="#000" stroke-width="1" stroke-dasharray="3 3"/><line x1="32" x2="1691" y1="672.5" y2="672.5" stroke="#000" stroke-width="1" stroke-dasharray="3 3"/><line x1="32" x2="1691" y1="721.5" y2="721.5" stroke="#000" stroke-width="1" stroke-dasharray="3 3"/><line x1="32" x2="1691" y1="769.5" y2="769.5" stroke="#000" stroke-width="1" stroke-dasharray="3 3"/><line x1="32" x2="1691" y1="818.5" y2="818.5" stroke="#000" stroke-width="1" stroke-dasharray="3 3"/><line x1="32" x2="1691" y1="842.5" y2="842.5" stroke="#000" stroke-width="1"/><path d="M31.5 624 V868 M31 624.5 H1692 M1691.5 624 V868 M31 867.5 H1692" stroke="#000" stroke-width="1" fill="none"/><line x1="31.5" x2="31.5" y1="868" y2="873" stroke="#000"/><line x1="86.5" x2="86.5" y1="868" y2="870.5" stroke="#000"/><line x1="142.5" x2="142.5" y1="868" y2="870.5" stroke="#000"/><line x1="197.5" x2="197.5" y1="868" y2="870.5" stroke="#000"/><line x1="253.5" x2="253.5" y1="868" y2="870.5" stroke="#000"/><line x1="308.5" x2="308.5" y1="868" y2="873" stroke="#000"/><line x1="363.5" x2="363.5" y1="868" y2="870.5" stroke="#000"/><line x1="419.5" x2="419.5" y1="868" y2="870.5" stroke="#000"/><line x1="474.5" x2="474.5" y1="868" y2="870.5" stroke="#000"/><line x1="530.5" x2="530.5" y1="868" y2="870.5" stroke="#000"/><line x1="585.5" x2="585.5" y1="868" y2="873" stroke="#000"/><line x1="640.5" x2="640.5" y1="868" y2="870.5" stroke="#000"/><line x1="696.5" x2="696.5" y1="868" y2="870.5" stroke="#000"/><line x1="751.5" x2="751.5" y1="868" y2="870.5" stroke="#000"/><line x1="807.5" x2="807.5" y1="868" y2="870.5" stroke="#000"/><line x1="862.5" x2="862.5" y1="868" y2="873" stroke="#000"/><line x1="917.5" x2="917.5" y1="868" y2="870.5" stroke="#000"/><line x1="972.5" x2="972.5" y1="868" y2="870.5" stroke="#000"/><line x1="1027.5" x2="1027.5" y1="868" y2="870.5" stroke="#000"/><line x1="1082.5" x2="1082.5" y1="868" y2="870.5" stroke="#000"/><line x1="1137.5" x2="1137.5" y1="868" y2="873" stroke="#000"/><line x1="1192.5" x2="1192.5" y1="868" y2="870.5" stroke="#000"/><line x1="1248.5" x2="1248.5" y1="868" y2="870.5" stroke="#000"/><line x1="1303.5" x2="1303.5" y1="868" y2="870.5" stroke="#000"/><line x1="1359.5" x2="1359.5" y1="868" y2="870.5" stroke="#000"/><line x1="1414.5" x2="1414.5" y1="868" y2="873" stroke="#000"/><line x1="1469.5" x2="1469.5" y1="868" y2="870.5" stroke="#000"/><line x1="1525.5" x2="1525.5" y1="868" y2="870.5" stroke="#000"/><line x1="1580.5" x2="1580.5" y1="868" y2="870.5" stroke="#000"/><line x1="1636.5" x2="1636.5" y1="868" y2="870.5" stroke="#000"/><line x1="1691.5" x2="1691.5" y1="868" y2="873" stroke="#000"/><line x1="27" x2="31" y1="624.5" y2="624.5" stroke="#000"/><line x1="28.5" x2="31" y1="636.5" y2="636.5" stroke="#000"/><line x1="28.5" x2="31" y1="648.5" y2="648.5" stroke="#000"/><line x1="28.5" x2="31" y1="660.5" y2="660.5" stroke="#000"/><line x1="27" x2="31" y1="672.5" y2="672.5" stroke="#000"/><line x1="28.5" x2="31" y1="684.5" y2="684.5" stroke="#000"/><line x1="28.5" x2="31" y1="696.5" y2="696.5" stroke="#000"/><line x1="28.5" x2="31" y1="709.5" y2="709.5" stroke="#000"/><line x1="27" x2="31" y1="721.5" y2="721.5" stroke="#000"/><line x1="28.5" x2="31" y1="733.5" y2="733.5" stroke="#000"/><line x1="28.5" x2="31" y1="745.5" y2="745.5" stroke="#000"/><line x1="28.5" x2="31" y1="757.5" y2="757.5" stroke="#000"/><line x1="27" x2="31" y1="769.5" y2="769.5" stroke="#000"/><line x1="28.5" x2="31" y1="781.5" y2="781.5" stroke="#000"/><line x1="28.5" x2="31" y1="794.5" y2="794.5" stroke="#000"/><line x1="28.5" x2="31" y1="806.5" y2="806.5" stroke="#000"/><line x1="27" x2="31" y1="818.5" y2="818.5" stroke="#000"/><line x1="28.5" x2="31" y1="830.5" y2="830.5" stroke="#000"/><line x1="28.5" x2="31" y1="842.5" y2="842.5" stroke="#000"/><line x1="28.5" x2="31" y1="855.5" y2="855.5" stroke="#000"/><line x1="27" x2="31" y1="867.5" y2="867.5" stroke="#000"/><polyline points="185.7,749.1 191.1,755.7 196.9,719.9 202.0,698.0 207.8,642.7 212.8,674.9 218.1,676.9 222.9,729.0 228.9,742.3 233.9,716.7 239.0,682.7 245.0,709.9 249.8,691.4 272.0,703.2 277.0,764.2 281.8,750.7 287.9,676.7 292.9,694.4 297.9,666.8 304.0,709.9 309.0,760.8 314.0,699.4 319.9,713.1 329.9,693.4 336.0,760.0 346.0,655.3 350.8,713.9 356.9,736.8 361.9,729.8 367.7,713.9 373.0,753.7 378.5,714.5 384.1,717.5 388.7,701.0 393.9,695.4 399.8,715.9 404.8,730.0 410.8,717.5 415.9,691.4 420.9,703.4 425.9,715.9 431.4,728.0 437.0,728.0 442.0,744.1 447.9,726.6 452.5,697.4 457.9,696.4 464.0,736.0 474.0,750.7 480.1,768.4 485.1,708.5 490.1,742.1 495.8,736.0 501.0,730.0 507.6,690.4 512.5,725.6 517.9,757.8 522.9,724.0 529.0,707.5 534.0,792.4 540.0,714.9 544.8,729.0 549.9,742.3 555.7,719.9 560.1,766.8 565.8,769.4 572.0,682.7 577.1,738.6 582.1,679.9 586.9,736.6 592.8,722.5 597.8,710.9 602.8,703.0 608.7,757.8 613.7,745.3 619.9,690.4 624.8,710.9 629.8,749.3 635.8,761.8 640.9,776.5 646.1,762.8 651.1,800.6 656.6,742.3 662.0,736.0 667.0,757.8 673.1,725.0 677.9,758.8 684.1,734.0 689.0,789.3 694.0,732.6 699.8,757.8 704.8,732.0 710.3,750.3 715.9,750.3 720.9,795.6 726.0,759.8 731.8,709.9 736.8,733.0 741.9,744.1 746.9,790.3 752.7,732.0 757.9,784.3 762.3,731.2 768.9,726.0 773.9,773.2 778.7,757.8 784.8,761.8 789.8,769.8 794.8,768.2 799.9,732.0 805.9,759.8 810.9,786.3 815.9,734.8 822.0,774.5 826.8,790.3 831.8,779.9 838.9,735.8 843.9,756.7 849.3,799.0 855.6,733.0 860.6,757.8 866.0,755.7 871.9,776.5 876.9,746.3 881.7,771.4 886.8,768.2 892.8,727.0 897.8,741.3 902.9,753.7 908.5,773.2 913.9,772.2 919.0,777.5 925.0,766.8 930.0,721.9 935.1,771.2 941.3,816.5 945.9,768.2 951.5,749.7 956.5,768.3 961.0,754.6 967.1,756.0 972.7,754.6 977.8,753.6 983.2,752.6 988.0,781.8 993.9,768.3 998.9,760.7 1004.9,772.3 1009.9,781.8 1015.0,758.6 1020.8,757.0 1025.8,757.6 1030.9,772.3 1035.9,738.9 1041.9,785.2 1047.0,774.3 1052.0,768.3 1058.0,764.1 1062.9,793.9 1068.9,773.3 1073.9,750.2 1078.8,765.7 1084.8,756.6 1089.8,764.7 1094.9,742.1 1100.3,757.6 1105.9,795.9 1111.0,758.6 1116.0,746.2 1121.0,772.3 1126.8,734.9 1131.9,769.3 1136.7,786.4 1142.0,753.0 1147.5,761.7 1152.5,768.7 1158.1,762.7 1163.1,738.9 1168.7,774.7 1173.8,783.8 1178.8,774.3 1184.2,768.1 1189.9,769.7 1195.3,767.1 1200.9,766.7 1206.0,733.9 1211.8,770.3 1216.8,791.2 1221.9,746.6 1227.9,734.9 1232.9,743.5 1238.0,756.0 1243.0,732.9 1249.0,770.3 1253.6,753.6 1258.9,755.6 1263.9,747.6 1269.9,790.4 1275.0,745.6 1280.0,735.9 1284.8,788.4 1290.9,770.3 1295.9,758.6 1300.9,755.0 1306.0,749.6 1312.0,756.6 1317.0,742.5 1322.1,770.3 1326.9,738.9 1332.9,784.4 1337.7,766.1 1343.2,785.4 1348.0,730.9 1353.7,737.9 1359.1,766.1 1363.7,747.2 1369.0,750.6 1374.6,771.3 1380.0,769.3 1384.9,721.0 1389.9,755.0 1395.9,711.8 1400.8,718.8 1405.8,725.8 1411.8,716.8 1416.9,737.9 1421.9,714.8 1426.9,722.0 1432.6,708.3 1438.0,704.3 1443.0,753.0 1453.7,726.8 1458.7,725.0 1464.7,725.0 1469.8,723.8 1474.8,687.2 1479.8,729.9 1485.9,704.3 1490.9,705.3 1495.9,730.5 1501.0,730.1 1507.0,748.6 1512.0,729.9 1517.1,686.2 1522.1,716.4 1528.1,741.1 1533.6,705.3 1538.6,717.8 1544.0,677.1 1549.9,748.6 1554.9,736.5 1559.7,742.5 1564.9,748.6" fill="none" stroke="#6e6e6e" stroke-width="1" shape-rendering="auto"/><rect x="181" y="743" width="10" height="13" fill="#000"/><rect x="186" y="751" width="10" height="10" fill="#000"/><rect x="192" y="715" width="10" height="10" fill="#000"/><rect x="197" y="693" width="10" height="10" fill="#000"/><rect x="203" y="638" width="10" height="10" fill="#000"/><rect x="208" y="670" width="10" height="10" fill="#000"/><rect x="213" y="672" width="10" height="10" fill="#000"/><rect x="218" y="724" width="10" height="10" fill="#000"/><rect x="224" y="736" width="10" height="13" fill="#000"/><rect x="229" y="712" width="10" height="10" fill="#000"/><rect x="234" y="676" width="10" height="13" fill="#000"/><rect x="240" y="705" width="10" height="10" fill="#000"/><rect x="245" y="685" width="10" height="12" fill="#000"/><rect x="267" y="698" width="10" height="10" fill="#000"/><rect x="272" y="759" width="10" height="10" fill="#000"/><rect x="277" y="745" width="10" height="12" fill="#000"/><rect x="283" y="672" width="10" height="10" fill="#000"/><rect x="288" y="689" width="10" height="10" fill="#000"/><rect x="293" y="662" width="10" height="10" fill="#000"/><rect x="299" y="705" width="10" height="10" fill="#000"/><rect x="304" y="756" width="10" height="10" fill="#000"/><rect x="309" y="694" width="10" height="10" fill="#000"/><rect x="315" y="708" width="10" height="10" fill="#000"/><rect x="325" y="688" width="10" height="10" fill="#000"/><rect x="331" y="755" width="10" height="10" fill="#000"/><rect x="341" y="650" width="10" height="10" fill="#000"/><rect x="346" y="709" width="10" height="10" fill="#000"/><rect x="352" y="732" width="10" height="10" fill="#000"/><rect x="357" y="725" width="10" height="10" fill="#000"/><rect x="363" y="709" width="10" height="10" fill="#000"/><rect x="368" y="749" width="10" height="10" fill="#000"/><rect x="374" y="710" width="10" height="10" fill="#000"/><rect x="379" y="712" width="10" height="10" fill="#000"/><rect x="384" y="696" width="10" height="10" fill="#000"/><rect x="389" y="690" width="10" height="10" fill="#000"/><rect x="395" y="711" width="10" height="10" fill="#000"/><rect x="400" y="725" width="10" height="10" fill="#000"/><rect x="406" y="712" width="10" height="10" fill="#000"/><rect x="411" y="685" width="10" height="12" fill="#000"/><rect x="416" y="698" width="10" height="10" fill="#000"/><rect x="421" y="711" width="10" height="10" fill="#000"/><rect x="426" y="723" width="10" height="10" fill="#000"/><rect x="432" y="723" width="10" height="10" fill="#000"/><rect x="437" y="738" width="10" height="13" fill="#000"/><rect x="443" y="722" width="10" height="10" fill="#000"/><rect x="448" y="692" width="10" height="10" fill="#000"/><rect x="453" y="691" width="10" height="10" fill="#000"/><rect x="459" y="731" width="10" height="10" fill="#000"/><rect x="469" y="745" width="10" height="12" fill="#000"/><rect x="475" y="763" width="10" height="10" fill="#000"/><rect x="480" y="704" width="10" height="10" fill="#000"/><rect x="485" y="736" width="10" height="13" fill="#000"/><rect x="491" y="731" width="10" height="10" fill="#000"/><rect x="496" y="725" width="10" height="10" fill="#000"/><rect x="503" y="684" width="10" height="13" fill="#000"/><rect x="508" y="721" width="10" height="10" fill="#000"/><rect x="513" y="753" width="10" height="10" fill="#000"/><rect x="518" y="719" width="10" height="10" fill="#000"/><rect x="524" y="702" width="10" height="10" fill="#000"/><rect x="529" y="787" width="10" height="10" fill="#000"/><rect x="535" y="710" width="10" height="10" fill="#000"/><rect x="540" y="724" width="10" height="10" fill="#000"/><rect x="545" y="736" width="10" height="13" fill="#000"/><rect x="551" y="715" width="10" height="10" fill="#000"/><rect x="555" y="762" width="10" height="10" fill="#000"/><rect x="561" y="764" width="10" height="10" fill="#000"/><rect x="567" y="676" width="10" height="13" fill="#000"/><rect x="572" y="734" width="10" height="10" fill="#000"/><rect x="577" y="675" width="10" height="10" fill="#000"/><rect x="582" y="732" width="10" height="10" fill="#000"/><rect x="588" y="718" width="10" height="10" fill="#000"/><rect x="593" y="706" width="10" height="10" fill="#000"/><rect x="598" y="698" width="10" height="10" fill="#000"/><rect x="604" y="753" width="10" height="10" fill="#000"/><rect x="609" y="739" width="10" height="13" fill="#000"/><rect x="615" y="684" width="10" height="13" fill="#000"/><rect x="620" y="706" width="10" height="10" fill="#000"/><rect x="625" y="743" width="10" height="13" fill="#000"/><rect x="631" y="757" width="10" height="10" fill="#000"/><rect x="636" y="772" width="10" height="10" fill="#000"/><rect x="641" y="758" width="10" height="10" fill="#000"/><rect x="646" y="796" width="10" height="10" fill="#000"/><rect x="652" y="736" width="10" height="13" fill="#000"/><rect x="657" y="731" width="10" height="10" fill="#000"/><rect x="662" y="753" width="10" height="10" fill="#000"/><rect x="668" y="720" width="10" height="10" fill="#000"/><rect x="673" y="754" width="10" height="10" fill="#000"/><rect x="679" y="729" width="10" height="10" fill="#000"/><rect x="684" y="784" width="10" height="10" fill="#000"/><rect x="689" y="728" width="10" height="10" fill="#000"/><rect x="695" y="753" width="10" height="10" fill="#000"/><rect x="700" y="727" width="10" height="10" fill="#000"/><rect x="705" y="744" width="10" height="13" fill="#000"/><rect x="711" y="744" width="10" height="13" fill="#000"/><rect x="716" y="791" width="10" height="10" fill="#000"/><rect x="721" y="755" width="10" height="10" fill="#000"/><rect x="727" y="705" width="10" height="10" fill="#000"/><rect x="732" y="728" width="10" height="10" fill="#000"/><rect x="737" y="738" width="10" height="13" fill="#000"/><rect x="742" y="785" width="10" height="10" fill="#000"/><rect x="748" y="727" width="10" height="10" fill="#000"/><rect x="753" y="779" width="10" height="10" fill="#000"/><rect x="757" y="726" width="10" height="10" fill="#000"/><rect x="764" y="721" width="10" height="10" fill="#000"/><rect x="769" y="768" width="10" height="10" fill="#000"/><rect x="774" y="753" width="10" height="10" fill="#000"/><rect x="780" y="757" width="10" height="10" fill="#000"/><rect x="785" y="765" width="10" height="10" fill="#000"/><rect x="790" y="763" width="10" height="10" fill="#000"/><rect x="795" y="727" width="10" height="10" fill="#000"/><rect x="801" y="755" width="10" height="10" fill="#000"/><rect x="806" y="781" width="10" height="10" fill="#000"/><rect x="811" y="730" width="10" height="10" fill="#000"/><rect x="817" y="770" width="10" height="10" fill="#000"/><rect x="822" y="785" width="10" height="10" fill="#000"/><rect x="827" y="775" width="10" height="10" fill="#000"/><rect x="834" y="731" width="10" height="10" fill="#000"/><rect x="839" y="752" width="10" height="10" fill="#000"/><rect x="844" y="794" width="10" height="10" fill="#000"/><rect x="851" y="728" width="10" height="10" fill="#000"/><rect x="856" y="753" width="10" height="10" fill="#000"/><rect x="861" y="751" width="10" height="10" fill="#000"/><rect x="867" y="772" width="10" height="10" fill="#000"/><rect x="872" y="740" width="10" height="13" fill="#000"/><rect x="877" y="766" width="10" height="10" fill="#000"/><rect x="882" y="763" width="10" height="10" fill="#000"/><rect x="888" y="722" width="10" height="10" fill="#000"/><rect x="893" y="735" width="10" height="13" fill="#000"/><rect x="898" y="749" width="10" height="10" fill="#000"/><rect x="904" y="768" width="10" height="10" fill="#000"/><rect x="909" y="767" width="10" height="10" fill="#000"/><rect x="914" y="772" width="10" height="10" fill="#000"/><rect x="920" y="762" width="10" height="10" fill="#000"/><rect x="925" y="717" width="10" height="10" fill="#000"/><rect x="930" y="766" width="10" height="10" fill="#000"/><rect x="936" y="812" width="10" height="10" fill="#000"/><rect x="941" y="763" width="10" height="10" fill="#000"/><rect x="946" y="743" width="10" height="13" fill="#000"/><rect x="952" y="763" width="10" height="10" fill="#000"/><rect x="956" y="750" width="10" height="10" fill="#000"/><rect x="962" y="751" width="10" height="10" fill="#000"/><rect x="968" y="750" width="10" height="10" fill="#000"/><rect x="973" y="749" width="10" height="10" fill="#000"/><rect x="978" y="748" width="10" height="10" fill="#000"/><rect x="983" y="777" width="10" height="10" fill="#000"/><rect x="989" y="763" width="10" height="10" fill="#000"/><rect x="994" y="756" width="10" height="10" fill="#000"/><rect x="1000" y="767" width="10" height="10" fill="#000"/><rect x="1005" y="777" width="10" height="10" fill="#000"/><rect x="1010" y="754" width="10" height="10" fill="#000"/><rect x="1016" y="752" width="10" height="10" fill="#000"/><rect x="1021" y="753" width="10" height="10" fill="#000"/><rect x="1026" y="767" width="10" height="10" fill="#000"/><rect x="1031" y="734" width="10" height="10" fill="#000"/><rect x="1037" y="780" width="10" height="10" fill="#000"/><rect x="1042" y="769" width="10" height="10" fill="#000"/><rect x="1047" y="763" width="10" height="10" fill="#000"/><rect x="1053" y="759" width="10" height="10" fill="#000"/><rect x="1058" y="789" width="10" height="10" fill="#000"/><rect x="1064" y="768" width="10" height="10" fill="#000"/><rect x="1069" y="744" width="10" height="13" fill="#000"/><rect x="1074" y="761" width="10" height="10" fill="#000"/><rect x="1080" y="752" width="10" height="10" fill="#000"/><rect x="1085" y="760" width="10" height="10" fill="#000"/><rect x="1090" y="736" width="10" height="13" fill="#000"/><rect x="1095" y="753" width="10" height="10" fill="#000"/><rect x="1101" y="791" width="10" height="10" fill="#000"/><rect x="1106" y="754" width="10" height="10" fill="#000"/><rect x="1111" y="740" width="10" height="13" fill="#000"/><rect x="1116" y="767" width="10" height="10" fill="#000"/><rect x="1122" y="730" width="10" height="10" fill="#000"/><rect x="1127" y="764" width="10" height="10" fill="#000"/><rect x="1132" y="781" width="10" height="10" fill="#000"/><rect x="1137" y="748" width="10" height="10" fill="#000"/><rect x="1142" y="757" width="10" height="10" fill="#000"/><rect x="1148" y="764" width="10" height="10" fill="#000"/><rect x="1153" y="758" width="10" height="10" fill="#000"/><rect x="1158" y="734" width="10" height="10" fill="#000"/><rect x="1164" y="770" width="10" height="10" fill="#000"/><rect x="1169" y="779" width="10" height="10" fill="#000"/><rect x="1174" y="769" width="10" height="10" fill="#000"/><rect x="1179" y="763" width="10" height="10" fill="#000"/><rect x="1185" y="765" width="10" height="10" fill="#000"/><rect x="1190" y="762" width="10" height="10" fill="#000"/><rect x="1196" y="762" width="10" height="10" fill="#000"/><rect x="1201" y="729" width="10" height="10" fill="#000"/><rect x="1207" y="765" width="10" height="10" fill="#000"/><rect x="1212" y="786" width="10" height="10" fill="#000"/><rect x="1217" y="740" width="10" height="13" fill="#000"/><rect x="1223" y="730" width="10" height="10" fill="#000"/><rect x="1228" y="737" width="10" height="13" fill="#000"/><rect x="1233" y="751" width="10" height="10" fill="#000"/><rect x="1238" y="728" width="10" height="10" fill="#000"/><rect x="1244" y="765" width="10" height="10" fill="#000"/><rect x="1249" y="749" width="10" height="10" fill="#000"/><rect x="1254" y="751" width="10" height="10" fill="#000"/><rect x="1259" y="741" width="10" height="13" fill="#000"/><rect x="1265" y="785" width="10" height="10" fill="#000"/><rect x="1270" y="739" width="10" height="13" fill="#000"/><rect x="1275" y="731" width="10" height="10" fill="#000"/><rect x="1280" y="783" width="10" height="10" fill="#000"/><rect x="1286" y="765" width="10" height="10" fill="#000"/><rect x="1291" y="754" width="10" height="10" fill="#000"/><rect x="1296" y="750" width="10" height="10" fill="#000"/><rect x="1301" y="743" width="10" height="13" fill="#000"/><rect x="1307" y="752" width="10" height="10" fill="#000"/><rect x="1312" y="736" width="10" height="13" fill="#000"/><rect x="1317" y="765" width="10" height="10" fill="#000"/><rect x="1322" y="734" width="10" height="10" fill="#000"/><rect x="1328" y="779" width="10" height="10" fill="#000"/><rect x="1333" y="761" width="10" height="10" fill="#000"/><rect x="1338" y="780" width="10" height="10" fill="#000"/><rect x="1343" y="726" width="10" height="10" fill="#000"/><rect x="1349" y="733" width="10" height="10" fill="#000"/><rect x="1354" y="761" width="10" height="10" fill="#000"/><rect x="1359" y="741" width="10" height="13" fill="#000"/><rect x="1364" y="745" width="10" height="12" fill="#000"/><rect x="1370" y="766" width="10" height="10" fill="#000"/><rect x="1375" y="764" width="10" height="10" fill="#000"/><rect x="1380" y="716" width="10" height="10" fill="#000"/><rect x="1385" y="750" width="10" height="10" fill="#000"/><rect x="1391" y="707" width="10" height="10" fill="#000"/><rect x="1396" y="714" width="10" height="10" fill="#000"/><rect x="1401" y="721" width="10" height="10" fill="#000"/><rect x="1407" y="712" width="10" height="10" fill="#000"/><rect x="1412" y="733" width="10" height="10" fill="#000"/><rect x="1417" y="710" width="10" height="10" fill="#000"/><rect x="1422" y="717" width="10" height="10" fill="#000"/><rect x="1428" y="703" width="10" height="10" fill="#000"/><rect x="1433" y="699" width="10" height="10" fill="#000"/><rect x="1438" y="748" width="10" height="10" fill="#000"/><rect x="1449" y="722" width="10" height="10" fill="#000"/><rect x="1454" y="720" width="10" height="10" fill="#000"/><rect x="1460" y="720" width="10" height="10" fill="#000"/><rect x="1465" y="719" width="10" height="10" fill="#000"/><rect x="1470" y="681" width="10" height="13" fill="#000"/><rect x="1475" y="725" width="10" height="10" fill="#000"/><rect x="1481" y="699" width="10" height="10" fill="#000"/><rect x="1486" y="700" width="10" height="10" fill="#000"/><rect x="1491" y="726" width="10" height="10" fill="#000"/><rect x="1496" y="725" width="10" height="10" fill="#000"/><rect x="1502" y="742" width="10" height="13" fill="#000"/><rect x="1507" y="725" width="10" height="10" fill="#000"/><rect x="1512" y="680" width="10" height="13" fill="#000"/><rect x="1517" y="711" width="10" height="10" fill="#000"/><rect x="1523" y="735" width="10" height="13" fill="#000"/><rect x="1529" y="700" width="10" height="10" fill="#000"/><rect x="1534" y="713" width="10" height="10" fill="#000"/><rect x="1539" y="672" width="10" height="10" fill="#000"/><rect x="1545" y="742" width="10" height="13" fill="#000"/><rect x="1550" y="732" width="10" height="10" fill="#000"/><rect x="1555" y="736" width="10" height="13" fill="#000"/><rect x="1560" y="742" width="10" height="13" fill="#000"/><rect x="181" y="749.1" width="10" height="1.2" fill="#f00"/><rect x="185.5" y="743" width="1.2" height="13" fill="#f00"/><rect x="186" y="755.6" width="10" height="1.2" fill="#f00"/><rect x="190.5" y="751" width="1.2" height="10" fill="#f00"/><rect x="192" y="719.6" width="10" height="1.2" fill="#f00"/><rect x="196.5" y="715" width="1.2" height="10" fill="#f00"/><rect x="197" y="697.6" width="10" height="1.2" fill="#f00"/><rect x="201.5" y="693" width="1.2" height="10" fill="#f00"/><rect x="203" y="642.6" width="10" height="1.2" fill="#f00"/><rect x="207.5" y="638" width="1.2" height="10" fill="#f00"/><rect x="208" y="674.6" width="10" height="1.2" fill="#f00"/><rect x="212.5" y="670" width="1.2" height="10" fill="#f00"/><rect x="213" y="676.6" width="10" height="1.2" fill="#f00"/><rect x="217.5" y="672" width="1.2" height="10" fill="#f00"/><rect x="218" y="728.6" width="10" height="1.2" fill="#f00"/><rect x="222.5" y="724" width="1.2" height="10" fill="#f00"/><rect x="224" y="742.1" width="10" height="1.2" fill="#f00"/><rect x="228.5" y="736" width="1.2" height="13" fill="#f00"/><rect x="229" y="716.6" width="10" height="1.2" fill="#f00"/><rect x="233.5" y="712" width="1.2" height="10" fill="#f00"/><rect x="234" y="682.1" width="10" height="1.2" fill="#f00"/><rect x="238.5" y="676" width="1.2" height="13" fill="#f00"/><rect x="240" y="709.6" width="10" height="1.2" fill="#f00"/><rect x="244.5" y="705" width="1.2" height="10" fill="#f00"/><rect x="245" y="690.6" width="10" height="1.2" fill="#f00"/><rect x="249.5" y="685" width="1.2" height="12" fill="#f00"/><rect x="267" y="702.6" width="10" height="1.2" fill="#f00"/><rect x="271.5" y="698" width="1.2" height="10" fill="#f00"/><rect x="272" y="763.6" width="10" height="1.2" fill="#f00"/><rect x="276.5" y="759" width="1.2" height="10" fill="#f00"/><rect x="277" y="750.6" width="10" height="1.2" fill="#f00"/><rect x="281.5" y="745" width="1.2" height="12" fill="#f00"/><rect x="283" y="676.6" width="10" height="1.2" fill="#f00"/><rect x="287.5" y="672" width="1.2" height="10" fill="#f00"/><rect x="288" y="693.6" width="10" height="1.2" fill="#f00"/><rect x="292.5" y="689" width="1.2" height="10" fill="#f00"/><rect x="293" y="666.6" width="10" height="1.2" fill="#f00"/><rect x="297.5" y="662" width="1.2" height="10" fill="#f00"/><rect x="299" y="709.6" width="10" height="1.2" fill="#f00"/><rect x="303.5" y="705" width="1.2" height="10" fill="#f00"/><rect x="304" y="760.6" width="10" height="1.2" fill="#f00"/><rect x="308.5" y="756" width="1.2" height="10" fill="#f00"/><rect x="309" y="698.6" width="10" height="1.2" fill="#f00"/><rect x="313.5" y="694" width="1.2" height="10" fill="#f00"/><rect x="315" y="712.6" width="10" height="1.2" fill="#f00"/><rect x="319.5" y="708" width="1.2" height="10" fill="#f00"/><rect x="325" y="692.6" width="10" height="1.2" fill="#f00"/><rect x="329.5" y="688" width="1.2" height="10" fill="#f00"/><rect x="331" y="759.6" width="10" height="1.2" fill="#f00"/><rect x="335.5" y="755" width="1.2" height="10" fill="#f00"/><rect x="341" y="654.6" width="10" height="1.2" fill="#f00"/><rect x="345.5" y="650" width="1.2" height="10" fill="#f00"/><rect x="346" y="713.6" width="10" height="1.2" fill="#f00"/><rect x="350.5" y="709" width="1.2" height="10" fill="#f00"/><rect x="352" y="736.6" width="10" height="1.2" fill="#f00"/><rect x="356.5" y="732" width="1.2" height="10" fill="#f00"/><rect x="357" y="729.6" width="10" height="1.2" fill="#f00"/><rect x="361.5" y="725" width="1.2" height="10" fill="#f00"/><rect x="363" y="713.6" width="10" height="1.2" fill="#f00"/><rect x="367.5" y="709" width="1.2" height="10" fill="#f00"/><rect x="368" y="753.6" width="10" height="1.2" fill="#f00"/><rect x="372.5" y="749" width="1.2" height="10" fill="#f00"/><rect x="374" y="714.6" width="10" height="1.2" fill="#f00"/><rect x="378.5" y="710" width="1.2" height="10" fill="#f00"/><rect x="379" y="716.6" width="10" height="1.2" fill="#f00"/><rect x="383.5" y="712" width="1.2" height="10" fill="#f00"/><rect x="384" y="700.6" width="10" height="1.2" fill="#f00"/><rect x="388.5" y="696" width="1.2" height="10" fill="#f00"/><rect x="389" y="694.6" width="10" height="1.2" fill="#f00"/><rect x="393.5" y="690" width="1.2" height="10" fill="#f00"/><rect x="395" y="715.6" width="10" height="1.2" fill="#f00"/><rect x="399.5" y="711" width="1.2" height="10" fill="#f00"/><rect x="400" y="729.6" width="10" height="1.2" fill="#f00"/><rect x="404.5" y="725" width="1.2" height="10" fill="#f00"/><rect x="406" y="716.6" width="10" height="1.2" fill="#f00"/><rect x="410.5" y="712" width="1.2" height="10" fill="#f00"/><rect x="411" y="690.6" width="10" height="1.2" fill="#f00"/><rect x="415.5" y="685" width="1.2" height="12" fill="#f00"/><rect x="416" y="702.6" width="10" height="1.2" fill="#f00"/><rect x="420.5" y="698" width="1.2" height="10" fill="#f00"/><rect x="421" y="715.6" width="10" height="1.2" fill="#f00"/><rect x="425.5" y="711" width="1.2" height="10" fill="#f00"/><rect x="426" y="727.6" width="10" height="1.2" fill="#f00"/><rect x="430.5" y="723" width="1.2" height="10" fill="#f00"/><rect x="432" y="727.6" width="10" height="1.2" fill="#f00"/><rect x="436.5" y="723" width="1.2" height="10" fill="#f00"/><rect x="437" y="744.1" width="10" height="1.2" fill="#f00"/><rect x="441.5" y="738" width="1.2" height="13" fill="#f00"/><rect x="443" y="726.6" width="10" height="1.2" fill="#f00"/><rect x="447.5" y="722" width="1.2" height="10" fill="#f00"/><rect x="448" y="696.6" width="10" height="1.2" fill="#f00"/><rect x="452.5" y="692" width="1.2" height="10" fill="#f00"/><rect x="453" y="695.6" width="10" height="1.2" fill="#f00"/><rect x="457.5" y="691" width="1.2" height="10" fill="#f00"/><rect x="459" y="735.6" width="10" height="1.2" fill="#f00"/><rect x="463.5" y="731" width="1.2" height="10" fill="#f00"/><rect x="469" y="750.6" width="10" height="1.2" fill="#f00"/><rect x="473.5" y="745" width="1.2" height="12" fill="#f00"/><rect x="475" y="767.6" width="10" height="1.2" fill="#f00"/><rect x="479.5" y="763" width="1.2" height="10" fill="#f00"/><rect x="480" y="708.6" width="10" height="1.2" fill="#f00"/><rect x="484.5" y="704" width="1.2" height="10" fill="#f00"/><rect x="485" y="742.1" width="10" height="1.2" fill="#f00"/><rect x="489.5" y="736" width="1.2" height="13" fill="#f00"/><rect x="491" y="735.6" width="10" height="1.2" fill="#f00"/><rect x="495.5" y="731" width="1.2" height="10" fill="#f00"/><rect x="496" y="729.6" width="10" height="1.2" fill="#f00"/><rect x="500.5" y="725" width="1.2" height="10" fill="#f00"/><rect x="503" y="690.1" width="10" height="1.2" fill="#f00"/><rect x="507.5" y="684" width="1.2" height="13" fill="#f00"/><rect x="508" y="725.6" width="10" height="1.2" fill="#f00"/><rect x="512.5" y="721" width="1.2" height="10" fill="#f00"/><rect x="513" y="757.6" width="10" height="1.2" fill="#f00"/><rect x="517.5" y="753" width="1.2" height="10" fill="#f00"/><rect x="518" y="723.6" width="10" height="1.2" fill="#f00"/><rect x="522.5" y="719" width="1.2" height="10" fill="#f00"/><rect x="524" y="706.6" width="10" height="1.2" fill="#f00"/><rect x="528.5" y="702" width="1.2" height="10" fill="#f00"/><rect x="529" y="791.6" width="10" height="1.2" fill="#f00"/><rect x="533.5" y="787" width="1.2" height="10" fill="#f00"/><rect x="535" y="714.6" width="10" height="1.2" fill="#f00"/><rect x="539.5" y="710" width="1.2" height="10" fill="#f00"/><rect x="540" y="728.6" width="10" height="1.2" fill="#f00"/><rect x="544.5" y="724" width="1.2" height="10" fill="#f00"/><rect x="545" y="742.1" width="10" height="1.2" fill="#f00"/><rect x="549.5" y="736" width="1.2" height="13" fill="#f00"/><rect x="551" y="719.6" width="10" height="1.2" fill="#f00"/><rect x="555.5" y="715" width="1.2" height="10" fill="#f00"/><rect x="555" y="766.6" width="10" height="1.2" fill="#f00"/><rect x="559.5" y="762" width="1.2" height="10" fill="#f00"/><rect x="561" y="768.6" width="10" height="1.2" fill="#f00"/><rect x="565.5" y="764" width="1.2" height="10" fill="#f00"/><rect x="567" y="682.1" width="10" height="1.2" fill="#f00"/><rect x="571.5" y="676" width="1.2" height="13" fill="#f00"/><rect x="572" y="738.6" width="10" height="1.2" fill="#f00"/><rect x="576.5" y="734" width="1.2" height="10" fill="#f00"/><rect x="577" y="679.6" width="10" height="1.2" fill="#f00"/><rect x="581.5" y="675" width="1.2" height="10" fill="#f00"/><rect x="582" y="736.6" width="10" height="1.2" fill="#f00"/><rect x="586.5" y="732" width="1.2" height="10" fill="#f00"/><rect x="588" y="722.6" width="10" height="1.2" fill="#f00"/><rect x="592.5" y="718" width="1.2" height="10" fill="#f00"/><rect x="593" y="710.6" width="10" height="1.2" fill="#f00"/><rect x="597.5" y="706" width="1.2" height="10" fill="#f00"/><rect x="598" y="702.6" width="10" height="1.2" fill="#f00"/><rect x="602.5" y="698" width="1.2" height="10" fill="#f00"/><rect x="604" y="757.6" width="10" height="1.2" fill="#f00"/><rect x="608.5" y="753" width="1.2" height="10" fill="#f00"/><rect x="609" y="744.2" width="10" height="3" fill="#f00"/><rect x="613.5" y="739" width="1.2" height="13" fill="#f00"/><rect x="615" y="690.1" width="10" height="1.2" fill="#f00"/><rect x="619.5" y="684" width="1.2" height="13" fill="#f00"/><rect x="620" y="710.6" width="10" height="1.2" fill="#f00"/><rect x="624.5" y="706" width="1.2" height="10" fill="#f00"/><rect x="625" y="749.1" width="10" height="1.2" fill="#f00"/><rect x="629.5" y="743" width="1.2" height="13" fill="#f00"/><rect x="631" y="761.6" width="10" height="1.2" fill="#f00"/><rect x="635.5" y="757" width="1.2" height="10" fill="#f00"/><rect x="636" y="776.6" width="10" height="1.2" fill="#f00"/><rect x="640.5" y="772" width="1.2" height="10" fill="#f00"/><rect x="641" y="762.6" width="10" height="1.2" fill="#f00"/><rect x="645.5" y="758" width="1.2" height="10" fill="#f00"/><rect x="646" y="800.6" width="10" height="1.2" fill="#f00"/><rect x="650.5" y="796" width="1.2" height="10" fill="#f00"/><rect x="652" y="742.1" width="10" height="1.2" fill="#f00"/><rect x="656.5" y="736" width="1.2" height="13" fill="#f00"/><rect x="657" y="735.6" width="10" height="1.2" fill="#f00"/><rect x="661.5" y="731" width="1.2" height="10" fill="#f00"/><rect x="662" y="757.6" width="10" height="1.2" fill="#f00"/><rect x="666.5" y="753" width="1.2" height="10" fill="#f00"/><rect x="668" y="724.6" width="10" height="1.2" fill="#f00"/><rect x="672.5" y="720" width="1.2" height="10" fill="#f00"/><rect x="673" y="758.6" width="10" height="1.2" fill="#f00"/><rect x="677.5" y="754" width="1.2" height="10" fill="#f00"/><rect x="679" y="733.6" width="10" height="1.2" fill="#f00"/><rect x="683.5" y="729" width="1.2" height="10" fill="#f00"/><rect x="684" y="788.6" width="10" height="1.2" fill="#f00"/><rect x="688.5" y="784" width="1.2" height="10" fill="#f00"/><rect x="689" y="732.6" width="10" height="1.2" fill="#f00"/><rect x="693.5" y="728" width="1.2" height="10" fill="#f00"/><rect x="695" y="757.6" width="10" height="1.2" fill="#f00"/><rect x="699.5" y="753" width="1.2" height="10" fill="#f00"/><rect x="700" y="731.6" width="10" height="1.2" fill="#f00"/><rect x="704.5" y="727" width="1.2" height="10" fill="#f00"/><rect x="705" y="750.1" width="10" height="1.2" fill="#f00"/><rect x="709.5" y="744" width="1.2" height="13" fill="#f00"/><rect x="711" y="750.1" width="10" height="1.2" fill="#f00"/><rect x="715.5" y="744" width="1.2" height="13" fill="#f00"/><rect x="716" y="795.6" width="10" height="1.2" fill="#f00"/><rect x="720.5" y="791" width="1.2" height="10" fill="#f00"/><rect x="721" y="759.6" width="10" height="1.2" fill="#f00"/><rect x="725.5" y="755" width="1.2" height="10" fill="#f00"/><rect x="727" y="709.6" width="10" height="1.2" fill="#f00"/><rect x="731.5" y="705" width="1.2" height="10" fill="#f00"/><rect x="732" y="732.6" width="10" height="1.2" fill="#f00"/><rect x="736.5" y="728" width="1.2" height="10" fill="#f00"/><rect x="737" y="744.1" width="10" height="1.2" fill="#f00"/><rect x="741.5" y="738" width="1.2" height="13" fill="#f00"/><rect x="742" y="789.6" width="10" height="1.2" fill="#f00"/><rect x="746.5" y="785" width="1.2" height="10" fill="#f00"/><rect x="748" y="731.6" width="10" height="1.2" fill="#f00"/><rect x="752.5" y="727" width="1.2" height="10" fill="#f00"/><rect x="753" y="783.6" width="10" height="1.2" fill="#f00"/><rect x="757.5" y="779" width="1.2" height="10" fill="#f00"/><rect x="757" y="730.6" width="10" height="1.2" fill="#f00"/><rect x="761.5" y="726" width="1.2" height="10" fill="#f00"/><rect x="764" y="725.6" width="10" height="1.2" fill="#f00"/><rect x="768.5" y="721" width="1.2" height="10" fill="#f00"/><rect x="769" y="772.6" width="10" height="1.2" fill="#f00"/><rect x="773.5" y="768" width="1.2" height="10" fill="#f00"/><rect x="774" y="757.6" width="10" height="1.2" fill="#f00"/><rect x="778.5" y="753" width="1.2" height="10" fill="#f00"/><rect x="780" y="761.6" width="10" height="1.2" fill="#f00"/><rect x="784.5" y="757" width="1.2" height="10" fill="#f00"/><rect x="785" y="769.6" width="10" height="1.2" fill="#f00"/><rect x="789.5" y="765" width="1.2" height="10" fill="#f00"/><rect x="790" y="767.6" width="10" height="1.2" fill="#f00"/><rect x="794.5" y="763" width="1.2" height="10" fill="#f00"/><rect x="795" y="731.6" width="10" height="1.2" fill="#f00"/><rect x="799.5" y="727" width="1.2" height="10" fill="#f00"/><rect x="801" y="759.6" width="10" height="1.2" fill="#f00"/><rect x="805.5" y="755" width="1.2" height="10" fill="#f00"/><rect x="806" y="785.6" width="10" height="1.2" fill="#f00"/><rect x="810.5" y="781" width="1.2" height="10" fill="#f00"/><rect x="811" y="734.6" width="10" height="1.2" fill="#f00"/><rect x="815.5" y="730" width="1.2" height="10" fill="#f00"/><rect x="817" y="774.6" width="10" height="1.2" fill="#f00"/><rect x="821.5" y="770" width="1.2" height="10" fill="#f00"/><rect x="822" y="789.6" width="10" height="1.2" fill="#f00"/><rect x="826.5" y="785" width="1.2" height="10" fill="#f00"/><rect x="827" y="779.6" width="10" height="1.2" fill="#f00"/><rect x="831.5" y="775" width="1.2" height="10" fill="#f00"/><rect x="834" y="735.6" width="10" height="1.2" fill="#f00"/><rect x="838.5" y="731" width="1.2" height="10" fill="#f00"/><rect x="839" y="756.6" width="10" height="1.2" fill="#f00"/><rect x="843.5" y="752" width="1.2" height="10" fill="#f00"/><rect x="844" y="798.6" width="10" height="1.2" fill="#f00"/><rect x="848.5" y="794" width="1.2" height="10" fill="#f00"/><rect x="851" y="732.6" width="10" height="1.2" fill="#f00"/><rect x="855.5" y="728" width="1.2" height="10" fill="#f00"/><rect x="856" y="757.6" width="10" height="1.2" fill="#f00"/><rect x="860.5" y="753" width="1.2" height="10" fill="#f00"/><rect x="861" y="755.6" width="10" height="1.2" fill="#f00"/><rect x="865.5" y="751" width="1.2" height="10" fill="#f00"/><rect x="867" y="776.6" width="10" height="1.2" fill="#f00"/><rect x="871.5" y="772" width="1.2" height="10" fill="#f00"/><rect x="872" y="746.1" width="10" height="1.2" fill="#f00"/><rect x="876.5" y="740" width="1.2" height="13" fill="#f00"/><rect x="877" y="770.6" width="10" height="1.2" fill="#f00"/><rect x="881.5" y="766" width="1.2" height="10" fill="#f00"/><rect x="882" y="767.6" width="10" height="1.2" fill="#f00"/><rect x="886.5" y="763" width="1.2" height="10" fill="#f00"/><rect x="888" y="726.6" width="10" height="1.2" fill="#f00"/><rect x="892.5" y="722" width="1.2" height="10" fill="#f00"/><rect x="893" y="741.1" width="10" height="1.2" fill="#f00"/><rect x="897.5" y="735" width="1.2" height="13" fill="#f00"/><rect x="898" y="753.6" width="10" height="1.2" fill="#f00"/><rect x="902.5" y="749" width="1.2" height="10" fill="#f00"/><rect x="904" y="772.6" width="10" height="1.2" fill="#f00"/><rect x="908.5" y="768" width="1.2" height="10" fill="#f00"/><rect x="909" y="771.6" width="10" height="1.2" fill="#f00"/><rect x="913.5" y="767" width="1.2" height="10" fill="#f00"/><rect x="914" y="776.6" width="10" height="1.2" fill="#f00"/><rect x="918.5" y="772" width="1.2" height="10" fill="#f00"/><rect x="920" y="766.6" width="10" height="1.2" fill="#f00"/><rect x="924.5" y="762" width="1.2" height="10" fill="#f00"/><rect x="925" y="721.6" width="10" height="1.2" fill="#f00"/><rect x="929.5" y="717" width="1.2" height="10" fill="#f00"/><rect x="930" y="770.6" width="10" height="1.2" fill="#f00"/><rect x="934.5" y="766" width="1.2" height="10" fill="#f00"/><rect x="936" y="816.6" width="10" height="1.2" fill="#f00"/><rect x="940.5" y="812" width="1.2" height="10" fill="#f00"/><rect x="941" y="767.6" width="10" height="1.2" fill="#f00"/><rect x="945.5" y="763" width="1.2" height="10" fill="#f00"/><rect x="946" y="749.1" width="10" height="1.2" fill="#f00"/><rect x="950.5" y="743" width="1.2" height="13" fill="#f00"/><rect x="952" y="767.6" width="10" height="1.2" fill="#f00"/><rect x="956.5" y="763" width="1.2" height="10" fill="#f00"/><rect x="956" y="754.6" width="10" height="1.2" fill="#f00"/><rect x="960.5" y="750" width="1.2" height="10" fill="#f00"/><rect x="962" y="755.6" width="10" height="1.2" fill="#f00"/><rect x="966.5" y="751" width="1.2" height="10" fill="#f00"/><rect x="968" y="754.6" width="10" height="1.2" fill="#f00"/><rect x="972.5" y="750" width="1.2" height="10" fill="#f00"/><rect x="973" y="753.6" width="10" height="1.2" fill="#f00"/><rect x="977.5" y="749" width="1.2" height="10" fill="#f00"/><rect x="978" y="752.6" width="10" height="1.2" fill="#f00"/><rect x="982.5" y="748" width="1.2" height="10" fill="#f00"/><rect x="983" y="781.6" width="10" height="1.2" fill="#f00"/><rect x="987.5" y="777" width="1.2" height="10" fill="#f00"/><rect x="989" y="767.6" width="10" height="1.2" fill="#f00"/><rect x="993.5" y="763" width="1.2" height="10" fill="#f00"/><rect x="994" y="760.6" width="10" height="1.2" fill="#f00"/><rect x="998.5" y="756" width="1.2" height="10" fill="#f00"/><rect x="1000" y="771.6" width="10" height="1.2" fill="#f00"/><rect x="1004.5" y="767" width="1.2" height="10" fill="#f00"/><rect x="1005" y="781.6" width="10" height="1.2" fill="#f00"/><rect x="1009.5" y="777" width="1.2" height="10" fill="#f00"/><rect x="1010" y="758.6" width="10" height="1.2" fill="#f00"/><rect x="1014.5" y="754" width="1.2" height="10" fill="#f00"/><rect x="1016" y="756.6" width="10" height="1.2" fill="#f00"/><rect x="1020.5" y="752" width="1.2" height="10" fill="#f00"/><rect x="1021" y="757.6" width="10" height="1.2" fill="#f00"/><rect x="1025.5" y="753" width="1.2" height="10" fill="#f00"/><rect x="1026" y="771.6" width="10" height="1.2" fill="#f00"/><rect x="1030.5" y="767" width="1.2" height="10" fill="#f00"/><rect x="1031" y="738.6" width="10" height="1.2" fill="#f00"/><rect x="1035.5" y="734" width="1.2" height="10" fill="#f00"/><rect x="1037" y="784.6" width="10" height="1.2" fill="#f00"/><rect x="1041.5" y="780" width="1.2" height="10" fill="#f00"/><rect x="1042" y="773.6" width="10" height="1.2" fill="#f00"/><rect x="1046.5" y="769" width="1.2" height="10" fill="#f00"/><rect x="1047" y="767.6" width="10" height="1.2" fill="#f00"/><rect x="1051.5" y="763" width="1.2" height="10" fill="#f00"/><rect x="1053" y="763.6" width="10" height="1.2" fill="#f00"/><rect x="1057.5" y="759" width="1.2" height="10" fill="#f00"/><rect x="1058" y="793.6" width="10" height="1.2" fill="#f00"/><rect x="1062.5" y="789" width="1.2" height="10" fill="#f00"/><rect x="1064" y="772.6" width="10" height="1.2" fill="#f00"/><rect x="1068.5" y="768" width="1.2" height="10" fill="#f00"/><rect x="1069" y="750.1" width="10" height="1.2" fill="#f00"/><rect x="1073.5" y="744" width="1.2" height="13" fill="#f00"/><rect x="1074" y="765.6" width="10" height="1.2" fill="#f00"/><rect x="1078.5" y="761" width="1.2" height="10" fill="#f00"/><rect x="1080" y="756.6" width="10" height="1.2" fill="#f00"/><rect x="1084.5" y="752" width="1.2" height="10" fill="#f00"/><rect x="1085" y="764.6" width="10" height="1.2" fill="#f00"/><rect x="1089.5" y="760" width="1.2" height="10" fill="#f00"/><rect x="1090" y="742.1" width="10" height="1.2" fill="#f00"/><rect x="1094.5" y="736" width="1.2" height="13" fill="#f00"/><rect x="1095" y="757.6" width="10" height="1.2" fill="#f00"/><rect x="1099.5" y="753" width="1.2" height="10" fill="#f00"/><rect x="1101" y="795.6" width="10" height="1.2" fill="#f00"/><rect x="1105.5" y="791" width="1.2" height="10" fill="#f00"/><rect x="1106" y="758.6" width="10" height="1.2" fill="#f00"/><rect x="1110.5" y="754" width="1.2" height="10" fill="#f00"/><rect x="1111" y="746.1" width="10" height="1.2" fill="#f00"/><rect x="1115.5" y="740" width="1.2" height="13" fill="#f00"/><rect x="1116" y="771.6" width="10" height="1.2" fill="#f00"/><rect x="1120.5" y="767" width="1.2" height="10" fill="#f00"/><rect x="1122" y="734.6" width="10" height="1.2" fill="#f00"/><rect x="1126.5" y="730" width="1.2" height="10" fill="#f00"/><rect x="1127" y="768.6" width="10" height="1.2" fill="#f00"/><rect x="1131.5" y="764" width="1.2" height="10" fill="#f00"/><rect x="1132" y="785.6" width="10" height="1.2" fill="#f00"/><rect x="1136.5" y="781" width="1.2" height="10" fill="#f00"/><rect x="1137" y="752.6" width="10" height="1.2" fill="#f00"/><rect x="1141.5" y="748" width="1.2" height="10" fill="#f00"/><rect x="1142" y="761.6" width="10" height="1.2" fill="#f00"/><rect x="1146.5" y="757" width="1.2" height="10" fill="#f00"/><rect x="1148" y="768.6" width="10" height="1.2" fill="#f00"/><rect x="1152.5" y="764" width="1.2" height="10" fill="#f00"/><rect x="1153" y="762.6" width="10" height="1.2" fill="#f00"/><rect x="1157.5" y="758" width="1.2" height="10" fill="#f00"/><rect x="1158" y="738.6" width="10" height="1.2" fill="#f00"/><rect x="1162.5" y="734" width="1.2" height="10" fill="#f00"/><rect x="1164" y="774.6" width="10" height="1.2" fill="#f00"/><rect x="1168.5" y="770" width="1.2" height="10" fill="#f00"/><rect x="1169" y="783.6" width="10" height="1.2" fill="#f00"/><rect x="1173.5" y="779" width="1.2" height="10" fill="#f00"/><rect x="1174" y="773.6" width="10" height="1.2" fill="#f00"/><rect x="1178.5" y="769" width="1.2" height="10" fill="#f00"/><rect x="1179" y="767.6" width="10" height="1.2" fill="#f00"/><rect x="1183.5" y="763" width="1.2" height="10" fill="#f00"/><rect x="1185" y="769.6" width="10" height="1.2" fill="#f00"/><rect x="1189.5" y="765" width="1.2" height="10" fill="#f00"/><rect x="1190" y="766.6" width="10" height="1.2" fill="#f00"/><rect x="1194.5" y="762" width="1.2" height="10" fill="#f00"/><rect x="1196" y="766.6" width="10" height="1.2" fill="#f00"/><rect x="1200.5" y="762" width="1.2" height="10" fill="#f00"/><rect x="1201" y="733.6" width="10" height="1.2" fill="#f00"/><rect x="1205.5" y="729" width="1.2" height="10" fill="#f00"/><rect x="1207" y="769.6" width="10" height="1.2" fill="#f00"/><rect x="1211.5" y="765" width="1.2" height="10" fill="#f00"/><rect x="1212" y="790.6" width="10" height="1.2" fill="#f00"/><rect x="1216.5" y="786" width="1.2" height="10" fill="#f00"/><rect x="1217" y="746.1" width="10" height="1.2" fill="#f00"/><rect x="1221.5" y="740" width="1.2" height="13" fill="#f00"/><rect x="1223" y="734.6" width="10" height="1.2" fill="#f00"/><rect x="1227.5" y="730" width="1.2" height="10" fill="#f00"/><rect x="1228" y="743.1" width="10" height="1.2" fill="#f00"/><rect x="1232.5" y="737" width="1.2" height="13" fill="#f00"/><rect x="1233" y="755.6" width="10" height="1.2" fill="#f00"/><rect x="1237.5" y="751" width="1.2" height="10" fill="#f00"/><rect x="1238" y="732.6" width="10" height="1.2" fill="#f00"/><rect x="1242.5" y="728" width="1.2" height="10" fill="#f00"/><rect x="1244" y="769.6" width="10" height="1.2" fill="#f00"/><rect x="1248.5" y="765" width="1.2" height="10" fill="#f00"/><rect x="1249" y="753.6" width="10" height="1.2" fill="#f00"/><rect x="1253.5" y="749" width="1.2" height="10" fill="#f00"/><rect x="1254" y="755.6" width="10" height="1.2" fill="#f00"/><rect x="1258.5" y="751" width="1.2" height="10" fill="#f00"/><rect x="1259" y="747.1" width="10" height="1.2" fill="#f00"/><rect x="1263.5" y="741" width="1.2" height="13" fill="#f00"/><rect x="1265" y="789.6" width="10" height="1.2" fill="#f00"/><rect x="1269.5" y="785" width="1.2" height="10" fill="#f00"/><rect x="1270" y="744.2" width="10" height="3" fill="#f00"/><rect x="1274.5" y="739" width="1.2" height="13" fill="#f00"/><rect x="1275" y="735.6" width="10" height="1.2" fill="#f00"/><rect x="1279.5" y="731" width="1.2" height="10" fill="#f00"/><rect x="1280" y="787.6" width="10" height="1.2" fill="#f00"/><rect x="1284.5" y="783" width="1.2" height="10" fill="#f00"/><rect x="1286" y="769.6" width="10" height="1.2" fill="#f00"/><rect x="1290.5" y="765" width="1.2" height="10" fill="#f00"/><rect x="1291" y="758.6" width="10" height="1.2" fill="#f00"/><rect x="1295.5" y="754" width="1.2" height="10" fill="#f00"/><rect x="1296" y="754.6" width="10" height="1.2" fill="#f00"/><rect x="1300.5" y="750" width="1.2" height="10" fill="#f00"/><rect x="1301" y="749.1" width="10" height="1.2" fill="#f00"/><rect x="1305.5" y="743" width="1.2" height="13" fill="#f00"/><rect x="1307" y="756.6" width="10" height="1.2" fill="#f00"/><rect x="1311.5" y="752" width="1.2" height="10" fill="#f00"/><rect x="1312" y="742.1" width="10" height="1.2" fill="#f00"/><rect x="1316.5" y="736" width="1.2" height="13" fill="#f00"/><rect x="1317" y="769.6" width="10" height="1.2" fill="#f00"/><rect x="1321.5" y="765" width="1.2" height="10" fill="#f00"/><rect x="1322" y="738.6" width="10" height="1.2" fill="#f00"/><rect x="1326.5" y="734" width="1.2" height="10" fill="#f00"/><rect x="1328" y="783.6" width="10" height="1.2" fill="#f00"/><rect x="1332.5" y="779" width="1.2" height="10" fill="#f00"/><rect x="1333" y="765.6" width="10" height="1.2" fill="#f00"/><rect x="1337.5" y="761" width="1.2" height="10" fill="#f00"/><rect x="1338" y="784.6" width="10" height="1.2" fill="#f00"/><rect x="1342.5" y="780" width="1.2" height="10" fill="#f00"/><rect x="1343" y="730.6" width="10" height="1.2" fill="#f00"/><rect x="1347.5" y="726" width="1.2" height="10" fill="#f00"/><rect x="1349" y="737.6" width="10" height="1.2" fill="#f00"/><rect x="1353.5" y="733" width="1.2" height="10" fill="#f00"/><rect x="1354" y="765.6" width="10" height="1.2" fill="#f00"/><rect x="1358.5" y="761" width="1.2" height="10" fill="#f00"/><rect x="1359" y="747.1" width="10" height="1.2" fill="#f00"/><rect x="1363.5" y="741" width="1.2" height="13" fill="#f00"/><rect x="1364" y="750.6" width="10" height="1.2" fill="#f00"/><rect x="1368.5" y="745" width="1.2" height="12" fill="#f00"/><rect x="1370" y="770.6" width="10" height="1.2" fill="#f00"/><rect x="1374.5" y="766" width="1.2" height="10" fill="#f00"/><rect x="1375" y="768.6" width="10" height="1.2" fill="#f00"/><rect x="1379.5" y="764" width="1.2" height="10" fill="#f00"/><rect x="1380" y="720.6" width="10" height="1.2" fill="#f00"/><rect x="1384.5" y="716" width="1.2" height="10" fill="#f00"/><rect x="1385" y="754.6" width="10" height="1.2" fill="#f00"/><rect x="1389.5" y="750" width="1.2" height="10" fill="#f00"/><rect x="1391" y="711.6" width="10" height="1.2" fill="#f00"/><rect x="1395.5" y="707" width="1.2" height="10" fill="#f00"/><rect x="1396" y="718.6" width="10" height="1.2" fill="#f00"/><rect x="1400.5" y="714" width="1.2" height="10" fill="#f00"/><rect x="1401" y="725.6" width="10" height="1.2" fill="#f00"/><rect x="1405.5" y="721" width="1.2" height="10" fill="#f00"/><rect x="1407" y="716.6" width="10" height="1.2" fill="#f00"/><rect x="1411.5" y="712" width="1.2" height="10" fill="#f00"/><rect x="1412" y="737.6" width="10" height="1.2" fill="#f00"/><rect x="1416.5" y="733" width="1.2" height="10" fill="#f00"/><rect x="1417" y="714.6" width="10" height="1.2" fill="#f00"/><rect x="1421.5" y="710" width="1.2" height="10" fill="#f00"/><rect x="1422" y="721.6" width="10" height="1.2" fill="#f00"/><rect x="1426.5" y="717" width="1.2" height="10" fill="#f00"/><rect x="1428" y="707.6" width="10" height="1.2" fill="#f00"/><rect x="1432.5" y="703" width="1.2" height="10" fill="#f00"/><rect x="1433" y="703.6" width="10" height="1.2" fill="#f00"/><rect x="1437.5" y="699" width="1.2" height="10" fill="#f00"/><rect x="1438" y="752.6" width="10" height="1.2" fill="#f00"/><rect x="1442.5" y="748" width="1.2" height="10" fill="#f00"/><rect x="1449" y="726.6" width="10" height="1.2" fill="#f00"/><rect x="1453.5" y="722" width="1.2" height="10" fill="#f00"/><rect x="1454" y="724.6" width="10" height="1.2" fill="#f00"/><rect x="1458.5" y="720" width="1.2" height="10" fill="#f00"/><rect x="1460" y="724.6" width="10" height="1.2" fill="#f00"/><rect x="1464.5" y="720" width="1.2" height="10" fill="#f00"/><rect x="1465" y="723.6" width="10" height="1.2" fill="#f00"/><rect x="1469.5" y="719" width="1.2" height="10" fill="#f00"/><rect x="1470" y="687.1" width="10" height="1.2" fill="#f00"/><rect x="1474.5" y="681" width="1.2" height="13" fill="#f00"/><rect x="1475" y="729.6" width="10" height="1.2" fill="#f00"/><rect x="1479.5" y="725" width="1.2" height="10" fill="#f00"/><rect x="1481" y="703.6" width="10" height="1.2" fill="#f00"/><rect x="1485.5" y="699" width="1.2" height="10" fill="#f00"/><rect x="1486" y="704.6" width="10" height="1.2" fill="#f00"/><rect x="1490.5" y="700" width="1.2" height="10" fill="#f00"/><rect x="1491" y="730.6" width="10" height="1.2" fill="#f00"/><rect x="1495.5" y="726" width="1.2" height="10" fill="#f00"/><rect x="1496" y="729.6" width="10" height="1.2" fill="#f00"/><rect x="1500.5" y="725" width="1.2" height="10" fill="#f00"/><rect x="1502" y="748.1" width="10" height="1.2" fill="#f00"/><rect x="1506.5" y="742" width="1.2" height="13" fill="#f00"/><rect x="1507" y="729.6" width="10" height="1.2" fill="#f00"/><rect x="1511.5" y="725" width="1.2" height="10" fill="#f00"/><rect x="1512" y="685.2" width="10" height="3" fill="#f00"/><rect x="1516.5" y="680" width="1.2" height="13" fill="#f00"/><rect x="1517" y="715.6" width="10" height="1.2" fill="#f00"/><rect x="1521.5" y="711" width="1.2" height="10" fill="#f00"/><rect x="1523" y="741.1" width="10" height="1.2" fill="#f00"/><rect x="1527.5" y="735" width="1.2" height="13" fill="#f00"/><rect x="1529" y="704.6" width="10" height="1.2" fill="#f00"/><rect x="1533.5" y="700" width="1.2" height="10" fill="#f00"/><rect x="1534" y="717.6" width="10" height="1.2" fill="#f00"/><rect x="1538.5" y="713" width="1.2" height="10" fill="#f00"/><rect x="1539" y="676.6" width="10" height="1.2" fill="#f00"/><rect x="1543.5" y="672" width="1.2" height="10" fill="#f00"/><rect x="1545" y="748.1" width="10" height="1.2" fill="#f00"/><rect x="1549.5" y="742" width="1.2" height="13" fill="#f00"/><rect x="1550" y="736.6" width="10" height="1.2" fill="#f00"/><rect x="1554.5" y="732" width="1.2" height="10" fill="#f00"/><rect x="1555" y="742.1" width="10" height="1.2" fill="#f00"/><rect x="1559.5" y="736" width="1.2" height="13" fill="#f00"/><rect x="1560" y="748.1" width="10" height="1.2" fill="#f00"/><rect x="1564.5" y="742" width="1.2" height="13" fill="#f00"/><circle cx="345.5" cy="851.5" r="4.3" fill="none" stroke="#0a8a0a" stroke-width="1" shape-rendering="auto"/><text x="0" y="0" font-size="10.67" text-anchor="end" fill="#000" transform="translate(25.3,629.5) scale(1,1.22)">0.18</text><text x="0" y="0" font-size="10.67" text-anchor="end" fill="#000" transform="translate(25.3,675.6) scale(1,1.0)">0.2</text><text x="0" y="0" font-size="10.67" text-anchor="end" fill="#000" transform="translate(25.3,724.7) scale(1,1.0)">0.22</text><text x="0" y="0" font-size="10.67" text-anchor="end" fill="#000" transform="translate(25.3,772.8) scale(1,1.0)">0.24</text><text x="0" y="0" font-size="10.67" text-anchor="end" fill="#000" transform="translate(25.3,821.8) scale(1,1.0)">0.26</text><text x="0" y="0" font-size="10.67" text-anchor="end" fill="#000" transform="translate(25.3,871.0) scale(1,1.31)">0.28</text><text x="30.4" y="885.3" font-size="10.67" text-anchor="middle" fill="#000">19.2</text><text x="307.4" y="885.3" font-size="10.67" text-anchor="middle" fill="#000">20.2</text><text x="584.4" y="885.3" font-size="10.67" text-anchor="middle" fill="#000">21.2</text><text x="861.4" y="885.3" font-size="10.67" text-anchor="middle" fill="#000">22.2</text><text x="1136.4" y="885.3" font-size="10.67" text-anchor="middle" fill="#000">23.2</text><text x="1413.4" y="885.3" font-size="10.67" text-anchor="middle" fill="#000">24.2</text><text x="1690.4" y="885.3" font-size="10.67" text-anchor="middle" fill="#000">25.2</text><text x="861.5" y="899.2" font-size="12.8" text-anchor="middle" fill="#000">Hours since 2020-08-13 0h UT (JD 2459074.5)</text></svg>
</body></html>
